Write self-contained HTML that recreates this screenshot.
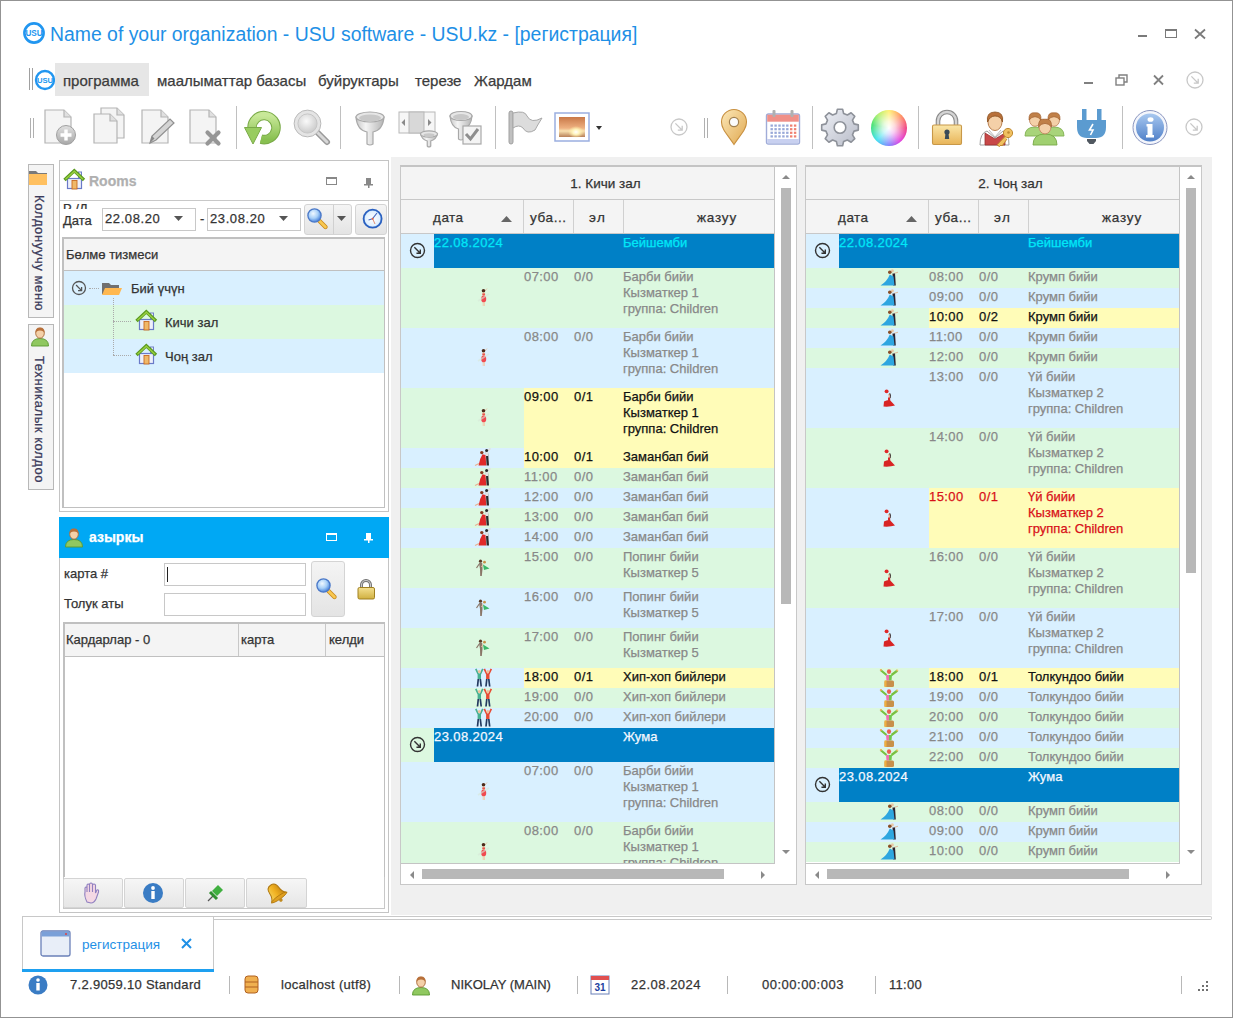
<!DOCTYPE html><html><head><meta charset="utf-8"><style>
html,body{margin:0;padding:0;width:1233px;height:1018px;overflow:hidden;background:#fff;}
body{position:relative;font-family:"Liberation Sans", sans-serif;}
.t{position:absolute;white-space:pre;line-height:16px;font-family:"Liberation Sans", sans-serif;-webkit-text-stroke:0.25px currentColor;}
svg{overflow:visible}
</style></head><body>
<div style="position:absolute;left:0px;top:0px;width:1233px;height:1018px;box-sizing:border-box;border:1px solid #939393;"></div>
<svg style="position:absolute;left:0px;top:0px" width="60" height="60" viewBox="0 0 60 60"><circle cx="34" cy="33" r="9.6" fill="none" stroke="#2196f0" stroke-width="2.6"/><text x="34" y="35.88" font-size="8.16" font-weight="bold" text-anchor="middle" fill="#2196f0" font-family="Liberation Sans">USU</text></svg>
<div class="t" style="left:50px;top:22px;font-size:19.4px;color:#1e90e6;line-height:24px;-webkit-text-stroke:0;">Name of your organization - USU software - USU.kz - [регистрация]</div>
<div style="position:absolute;left:1138px;top:35px;width:9px;height:2px;background:#7a7a7a"></div>
<div style="position:absolute;left:1165px;top:29px;width:12px;height:9px;box-sizing:border-box;border:1.5px solid #7a7a7a;border-top-width:2.5px"></div>
<svg style="position:absolute;left:1194px;top:29px" width="12" height="10" viewBox="0 0 12 10"><path d="M1 0.5 L11 9.5 M11 0.5 L1 9.5" stroke="#7a7a7a" stroke-width="1.8"/></svg>
<div style="position:absolute;left:29px;top:68px;width:1px;height:22px;background:#a0a0a0"></div>
<div style="position:absolute;left:32px;top:68px;width:1px;height:22px;background:#a0a0a0"></div>
<svg style="position:absolute;left:30px;top:66px" width="30" height="28" viewBox="0 0 30 28"><circle cx="15" cy="14" r="9" fill="none" stroke="#2196f0" stroke-width="2.4"/><text x="15" y="16.7" font-size="7.6499999999999995" font-weight="bold" text-anchor="middle" fill="#2196f0" font-family="Liberation Sans">USU</text></svg>
<div style="position:absolute;left:55px;top:63px;width:94px;height:33px;background:#e6e6e6"></div>
<div class="t" style="left:63px;top:72px;font-size:15px;color:#3b3b3b;line-height:18px;">программа</div>
<div class="t" style="left:157px;top:72px;font-size:15px;color:#3b3b3b;line-height:18px;">маалыматтар базасы</div>
<div class="t" style="left:318px;top:72px;font-size:15px;color:#3b3b3b;line-height:18px;">буйруктары</div>
<div class="t" style="left:415px;top:72px;font-size:15px;color:#3b3b3b;line-height:18px;">терезе</div>
<div class="t" style="left:474px;top:72px;font-size:15px;color:#3b3b3b;line-height:18px;">Жардам</div>
<div style="position:absolute;left:1084px;top:82px;width:9px;height:2px;background:#808080"></div>
<svg style="position:absolute;left:1115px;top:74px" width="14" height="12" viewBox="0 0 14 12"><rect x="1" y="4" width="8" height="7" fill="#fff" stroke="#808080" stroke-width="1.4"/><path d="M4 4 V1 H12 V8 H9" fill="none" stroke="#808080" stroke-width="1.4"/></svg>
<svg style="position:absolute;left:1153px;top:75px" width="11" height="10" viewBox="0 0 11 10"><path d="M1 0.5 L10 9.5 M10 0.5 L1 9.5" stroke="#808080" stroke-width="1.8"/></svg>
<svg style="position:absolute;left:1180px;top:65px" width="30" height="30" viewBox="0 0 30 30"><circle cx="15" cy="15" r="8" fill="none" stroke="#c8c8c8" stroke-width="1.3"/><path d="M11.4 11.4 L18.2 18.2 M18.2 13.8 V18.2 H13.8" fill="none" stroke="#c8c8c8" stroke-width="1.3"/></svg>
<div style="position:absolute;left:30px;top:118px;width:1px;height:20px;background:#b0b0b0"></div>
<div style="position:absolute;left:33px;top:118px;width:1px;height:20px;background:#b0b0b0"></div>
<svg style="position:absolute;left:44px;top:108px" width="36" height="40" viewBox="0 0 36 40"><path d="M1 2 H20 L27 9 V35 H1 Z" fill="#f4f4f4" stroke="#b4b4b4" stroke-width="1.2"/><path d="M20 2 V9 H27" fill="#e0e0e0" stroke="#b4b4b4" stroke-width="1.2"/><defs><linearGradient id="pl" x1="0" y1="0" x2="0" y2="1"><stop offset="0" stop-color="#e0e0e0"/><stop offset="1" stop-color="#a8a8a8"/></linearGradient></defs><circle cx="22" cy="27" r="9.5" fill="url(#pl)" stroke="#a0a0a0"/><path d="M22 21.5 V32.5 M16.5 27 H27.5" stroke="#fff" stroke-width="3.4"/></svg>
<svg style="position:absolute;left:92px;top:108px" width="36" height="40" viewBox="0 0 36 40"><path d="M9 0 H25 L32 7 V30 H9 Z" fill="#f4f4f4" stroke="#b4b4b4" stroke-width="1.2"/><path d="M25 0 V7 H32" fill="#e0e0e0" stroke="#b4b4b4" stroke-width="1.2"/><path d="M2 6 H18 L25 13 V35 H2 Z" fill="#f4f4f4" stroke="#b4b4b4" stroke-width="1.2"/><path d="M18 6 V13 H25" fill="#e0e0e0" stroke="#b4b4b4" stroke-width="1.2"/></svg>
<svg style="position:absolute;left:140px;top:108px" width="36" height="40" viewBox="0 0 36 40"><path d="M2 2 H21 L28 9 V35 H2 Z" fill="#f4f4f4" stroke="#b4b4b4" stroke-width="1.2"/><path d="M21 2 V9 H28" fill="#e0e0e0" stroke="#b4b4b4" stroke-width="1.2"/><path d="M10 35 L12 28 L30 11 L34 15 L16 32 Z" fill="#d4d4d4" stroke="#909090" stroke-width="1.2"/><path d="M10 35 L12 28 L14.5 30.5 Z" fill="#888"/></svg>
<svg style="position:absolute;left:188px;top:108px" width="36" height="40" viewBox="0 0 36 40"><path d="M2 2 H21 L28 9 V35 H2 Z" fill="#f4f4f4" stroke="#b4b4b4" stroke-width="1.2"/><path d="M21 2 V9 H28" fill="#e0e0e0" stroke="#b4b4b4" stroke-width="1.2"/><path d="M19.5 24.5 L30.5 35.5 M30.5 24.5 L19.5 35.5" stroke="#969696" stroke-width="4.2" stroke-linecap="round"/></svg>
<div style="position:absolute;left:236px;top:106px;width:1px;height:43px;background:#c0c0c0"></div>
<svg style="position:absolute;left:244px;top:108px" width="40" height="40" viewBox="0 0 40 40"><defs><linearGradient id="rg" x1="0" y1="0" x2="0" y2="1"><stop offset="0" stop-color="#c8e898"/><stop offset="1" stop-color="#88c050"/></linearGradient></defs><path d="M8 19.5 A12 12 0 1 1 17 31.2" fill="none" stroke="#7aaa48" stroke-width="9.5"/><path d="M8 19.5 A12 12 0 1 1 17 31.2" fill="none" stroke="url(#rg)" stroke-width="7.5"/><path d="M0.5 19.5 L17.5 19.5 L9 36 Z" fill="#98cc60" stroke="#7aaa48" stroke-width="1"/></svg>
<svg style="position:absolute;left:292px;top:108px" width="40" height="40" viewBox="0 0 40 40"><defs><radialGradient id="sg" cx="0.45" cy="0.4" r="0.6"><stop offset="0" stop-color="#fafafa"/><stop offset="1" stop-color="#c4c4c4"/></radialGradient></defs><path d="M26 25 L35 34" stroke="#9a9a9a" stroke-width="6" stroke-linecap="round"/><path d="M26 25 L35 34" stroke="#d8d8d8" stroke-width="3" stroke-linecap="round"/><circle cx="15.5" cy="15.5" r="11.5" fill="url(#sg)" stroke="#e4e4e4" stroke-width="4"/><circle cx="15.5" cy="15.5" r="13.4" fill="none" stroke="#b4b4b4" stroke-width="0.9"/><circle cx="15.5" cy="15.5" r="9.6" fill="none" stroke="#c0c0c0" stroke-width="0.8"/></svg>
<div style="position:absolute;left:340px;top:106px;width:1px;height:43px;background:#c0c0c0"></div>
<svg style="position:absolute;left:353px;top:108px" width="36" height="40" viewBox="0 0 36 40"><defs><linearGradient id="fg" x1="0" y1="0" x2="1" y2="0"><stop offset="0" stop-color="#c8c8c8"/><stop offset="0.35" stop-color="#f4f4f4"/><stop offset="1" stop-color="#b4b4b4"/></linearGradient></defs><path d="M3 9 Q4 22 14.0 24 V36 Q17 38 20.0 36 V24 Q30 22 31 9 Z" fill="url(#fg)" stroke="#a8a8a8" stroke-width="1.2"/><ellipse cx="17" cy="9" rx="14" ry="5" fill="#e6e6e6" stroke="#a8a8a8" stroke-width="1.2"/><ellipse cx="17" cy="10" rx="11" ry="3.5" fill="#c8c8c8"/></svg>
<svg style="position:absolute;left:398px;top:108px" width="44" height="40" viewBox="0 0 44 40"><rect x="1" y="4" width="36" height="21" fill="#f6f6f6" stroke="#b8b8b8"/><rect x="11" y="4" width="15" height="21" fill="#d8d8d8" stroke="#b8b8b8"/><path d="M7 11 L3.5 14.5 L7 18 Z M30 11 L33.5 14.5 L30 18 Z" fill="#8a8a8a"/><path d="M22.5 26 Q23.5 31 29.25 33 V38 Q31 40 32.75 38 V33 Q38.5 31 39.5 26 Z" fill="url(#fg)" stroke="#a8a8a8" stroke-width="1.2"/><ellipse cx="31" cy="26" rx="8.5" ry="3.2" fill="#e6e6e6" stroke="#a8a8a8" stroke-width="1.2"/><ellipse cx="31" cy="27" rx="5.5" ry="1.7000000000000002" fill="#c8c8c8"/></svg>
<svg style="position:absolute;left:448px;top:108px" width="40" height="40" viewBox="0 0 40 40"><path d="M2 8 Q3 19 10.5 21 V31 Q13 33 15.5 31 V21 Q23 19 24 8 Z" fill="url(#fg)" stroke="#a8a8a8" stroke-width="1.2"/><ellipse cx="13" cy="8" rx="11" ry="4.5" fill="#e6e6e6" stroke="#a8a8a8" stroke-width="1.2"/><ellipse cx="13" cy="9" rx="8" ry="3.0" fill="#c8c8c8"/><rect x="15" y="18" width="18" height="18" fill="#f4f4f4" stroke="#a8a8a8" stroke-width="1.2"/><path d="M18 26 L22.5 31 L30 21" fill="none" stroke="#8e8e8e" stroke-width="3"/></svg>
<div style="position:absolute;left:495px;top:106px;width:1px;height:43px;background:#c0c0c0"></div>
<svg style="position:absolute;left:505px;top:108px" width="40" height="40" viewBox="0 0 40 40"><rect x="4" y="3" width="4" height="33" rx="2" fill="#c0c0c0" stroke="#a0a0a0"/><path d="M8 5 Q20 2 22 8 Q26 16 37 10 Q32 18 30 22 Q22 27 18 20 Q14 16 8 20 Z" fill="#dcdcdc" stroke="#a8a8a8"/></svg>
<svg style="position:absolute;left:553px;top:108px" width="50" height="40" viewBox="0 0 50 40"><defs><linearGradient id="sky" x1="0" y1="0" x2="0" y2="1"><stop offset="0" stop-color="#c87848"/><stop offset="0.55" stop-color="#eeb080"/><stop offset="0.7" stop-color="#f8e0b0"/><stop offset="1" stop-color="#b88058"/></linearGradient><radialGradient id="sun" cx="0.5" cy="0.5" r="0.5"><stop offset="0" stop-color="#ffffff"/><stop offset="0.4" stop-color="#fff6c0"/><stop offset="1" stop-color="#fff0a0" stop-opacity="0"/></radialGradient></defs><rect x="2" y="5" width="34" height="28" fill="#fff" stroke="#9aaee0" stroke-width="1.5"/><rect x="6" y="9" width="26" height="20" fill="url(#sky)"/><ellipse cx="23" cy="24" rx="8" ry="6" fill="url(#sun)"/><path d="M43 18 H49 L46 22 Z" fill="#333"/></svg>
<svg style="position:absolute;left:664px;top:112px" width="30" height="30" viewBox="0 0 30 30"><circle cx="15" cy="15" r="8" fill="none" stroke="#c8c8c8" stroke-width="1.3"/><path d="M11.4 11.4 L18.2 18.2 M18.2 13.8 V18.2 H13.8" fill="none" stroke="#c8c8c8" stroke-width="1.3"/></svg>
<div style="position:absolute;left:704px;top:118px;width:1px;height:20px;background:#b0b0b0"></div>
<div style="position:absolute;left:707px;top:118px;width:1px;height:20px;background:#b0b0b0"></div>
<svg style="position:absolute;left:716px;top:108px" width="36" height="40" viewBox="0 0 36 40"><defs><linearGradient id="mp" x1="0" y1="0" x2="1" y2="1"><stop offset="0" stop-color="#fce8b8"/><stop offset="1" stop-color="#e0a850"/></linearGradient></defs><path d="M18 36.5 C11 26 5.5 21 5.5 14 A12.5 12.5 0 0 1 30.5 14 C30.5 21 25 26 18 36.5 Z" fill="url(#mp)" stroke="#c89040" stroke-width="1.1"/><circle cx="18" cy="14" r="4.6" fill="#fbfbfb" stroke="#a08050" stroke-width="1.2"/></svg>
<svg style="position:absolute;left:764px;top:108px" width="38" height="40" viewBox="0 0 38 40"><rect x="2.5" y="6" width="33" height="30" rx="2" fill="#fff" stroke="#a0acd8" stroke-width="1.4"/><rect x="3.2" y="6.7" width="31.6" height="7" fill="#f09088"/><rect x="3.2" y="31" width="31.6" height="4.3" fill="#c8d0f0"/><rect x="8.5" y="2" width="3" height="7" rx="1" fill="#b0b0b0"/><rect x="26.5" y="2" width="3" height="7" rx="1" fill="#b0b0b0"/><rect x="6.5" y="16.5" width="2.4" height="2.2" fill="#98a8d8"/><rect x="10.4" y="16.5" width="2.4" height="2.2" fill="#98a8d8"/><rect x="14.3" y="16.5" width="2.4" height="2.2" fill="#98a8d8"/><rect x="18.2" y="16.5" width="2.4" height="2.2" fill="#98a8d8"/><rect x="22.1" y="16.5" width="2.4" height="2.2" fill="#98a8d8"/><rect x="26.0" y="16.5" width="2.4" height="2.2" fill="#f08070"/><rect x="29.9" y="16.5" width="2.4" height="2.2" fill="#f08070"/><rect x="6.5" y="20.1" width="2.4" height="2.2" fill="#98a8d8"/><rect x="10.4" y="20.1" width="2.4" height="2.2" fill="#98a8d8"/><rect x="14.3" y="20.1" width="2.4" height="2.2" fill="#98a8d8"/><rect x="18.2" y="20.1" width="2.4" height="2.2" fill="#98a8d8"/><rect x="22.1" y="20.1" width="2.4" height="2.2" fill="#98a8d8"/><rect x="26.0" y="20.1" width="2.4" height="2.2" fill="#f08070"/><rect x="29.9" y="20.1" width="2.4" height="2.2" fill="#f08070"/><rect x="6.5" y="23.7" width="2.4" height="2.2" fill="#98a8d8"/><rect x="10.4" y="23.7" width="2.4" height="2.2" fill="#98a8d8"/><rect x="14.3" y="23.7" width="2.4" height="2.2" fill="#98a8d8"/><rect x="18.2" y="23.7" width="2.4" height="2.2" fill="#98a8d8"/><rect x="22.1" y="23.7" width="2.4" height="2.2" fill="#98a8d8"/><rect x="26.0" y="23.7" width="2.4" height="2.2" fill="#f08070"/><rect x="29.9" y="23.7" width="2.4" height="2.2" fill="#f08070"/><rect x="6.5" y="27.3" width="2.4" height="2.2" fill="#98a8d8"/><rect x="10.4" y="27.3" width="2.4" height="2.2" fill="#98a8d8"/><rect x="14.3" y="27.3" width="2.4" height="2.2" fill="#98a8d8"/><rect x="18.2" y="27.3" width="2.4" height="2.2" fill="#98a8d8"/><rect x="22.1" y="27.3" width="2.4" height="2.2" fill="#98a8d8"/><rect x="26.0" y="27.3" width="2.4" height="2.2" fill="#f08070"/><rect x="29.9" y="27.3" width="2.4" height="2.2" fill="#f08070"/></svg>
<div style="position:absolute;left:812px;top:106px;width:1px;height:43px;background:#c0c0c0"></div>
<svg style="position:absolute;left:820px;top:108px" width="40" height="40" viewBox="0 0 40 40"><defs><linearGradient id="gg" x1="0" y1="0" x2="1" y2="1"><stop offset="0" stop-color="#eef0f6"/><stop offset="1" stop-color="#b8bcc8"/></linearGradient></defs><path d="M34.04 15.89 L38.32 16.89 L38.32 22.11 L34.04 23.11 L32.48 26.88 L34.79 30.61 L31.11 34.29 L27.38 31.98 L23.61 33.54 L22.61 37.82 L17.39 37.82 L16.39 33.54 L12.62 31.98 L8.89 34.29 L5.21 30.61 L7.52 26.88 L5.96 23.11 L1.68 22.11 L1.68 16.89 L5.96 15.89 L7.52 12.12 L5.21 8.39 L8.89 4.71 L12.62 7.02 L16.39 5.46 L17.39 1.18 L22.61 1.18 L23.61 5.46 L27.38 7.02 L31.11 4.71 L34.79 8.39 L32.48 12.12 Z" fill="url(#gg)" stroke="#8e929a" stroke-width="1.6" stroke-linejoin="round"/><circle cx="20" cy="19.5" r="5.8" fill="#fff" stroke="#8e929a" stroke-width="1.6"/></svg>
<div style="position:absolute;left:871px;top:110px;width:36px;height:36px;border-radius:50%;background:radial-gradient(circle, rgba(255,255,255,1) 0%, rgba(255,255,255,0.75) 25%, rgba(255,255,255,0) 70%), conic-gradient(from 0deg, #fff070, #ff9060, #f04080 90deg, #e040e0 140deg, #8080ff 180deg, #40e0f0 225deg, #40e070 280deg, #b0f070 320deg, #fff070)"></div>
<div style="position:absolute;left:918px;top:106px;width:1px;height:43px;background:#c0c0c0"></div>
<svg style="position:absolute;left:928px;top:108px" width="38" height="40" viewBox="0 0 38 40"><defs><linearGradient id="lk" x1="0" y1="0" x2="0" y2="1"><stop offset="0" stop-color="#fae6a8"/><stop offset="1" stop-color="#e8b458"/></linearGradient><linearGradient id="sh" x1="0" y1="0" x2="1" y2="0"><stop offset="0" stop-color="#909090"/><stop offset="0.5" stop-color="#e0e0e0"/><stop offset="1" stop-color="#909090"/></linearGradient></defs><path d="M10 17 V13 A9 9 0 0 1 28 13 V17" fill="none" stroke="#8a8a8a" stroke-width="4.6"/><path d="M10 17 V13 A9 9 0 0 1 28 13 V17" fill="none" stroke="#d4d4d4" stroke-width="2.4"/><rect x="4.5" y="17" width="29" height="19.5" rx="1.5" fill="url(#lk)" stroke="#c89848" stroke-width="1.1"/><circle cx="19" cy="24" r="2.6" fill="#3a4a58"/><path d="M17.6 25 L16.8 31 H21.2 L20.4 25 Z" fill="#3a4a58"/></svg>
<svg style="position:absolute;left:976px;top:108px" width="40" height="40" viewBox="0 0 40 40"><path d="M4 37 Q4 25 11 23 L19 30 L27 23 Q33 25 33 37 Z" fill="#fff" stroke="#a0a0a0" stroke-width="1"/><path d="M9 37 V25 L19 31 L29 25 V37 Z" fill="#c84848" stroke="#983030" stroke-width="0.8"/><path d="M13 22 L19 29 L25 22" fill="#fff" stroke="#aaa" stroke-width="0.8"/><ellipse cx="19" cy="14" rx="7" ry="8.5" fill="#f4d0a8" stroke="#b88050" stroke-width="1"/><path d="M11.5 14 Q10 4 19 4 Q28 4 26.5 14 Q25 8 19 8 Q14 8 11.5 14 Z" fill="#b8703a" stroke="#8a5020" stroke-width="0.8"/><circle cx="32" cy="25" r="4.6" fill="#f0c060" stroke="#c08a30" stroke-width="1"/><circle cx="32.5" cy="24.5" r="1.3" fill="#c08a30"/><path d="M29 28.5 L21 37 L23.5 38.5 L25 37 L26 38 L31 31" fill="#f0c060" stroke="#c08a30" stroke-width="1"/></svg>
<svg style="position:absolute;left:1024px;top:108px" width="42" height="40" viewBox="0 0 42 40"><path d="M1 28 Q1 19 11 19 Q21 19 21 28 Z" fill="#a8d47a" stroke="#80b050" stroke-width="0.9"/><path d="M20 28 Q20 19 30 19 Q40 19 40 28 Z" fill="#a8d47a" stroke="#80b050" stroke-width="0.9"/><ellipse cx="11" cy="12" rx="5.5" ry="6.324999999999999" fill="#f4d0a8" stroke="#c08860" stroke-width="0.9"/><path d="M5.0 12 Q4.5 3.75 11 4.85 Q17.5 3.75 17.0 12 Q14.3 8.7 11 8.7 Q7.7 8.7 5.0 12 Z" fill="#c08048" stroke="#a06030" stroke-width="0.7"/><ellipse cx="30" cy="12" rx="5.5" ry="6.324999999999999" fill="#f4d0a8" stroke="#c08860" stroke-width="0.9"/><path d="M24.0 12 Q23.5 3.75 30 4.85 Q36.5 3.75 36.0 12 Q33.3 8.7 30 8.7 Q26.7 8.7 24.0 12 Z" fill="#c08048" stroke="#a06030" stroke-width="0.7"/><path d="M9 37 Q9 26 21 26 Q33 26 33 37 Z" fill="#a0d070" stroke="#78a848" stroke-width="0.9"/><ellipse cx="21" cy="19" rx="6" ry="6.8999999999999995" fill="#f4d0a8" stroke="#c08860" stroke-width="0.9"/><path d="M14.5 19 Q14 10.0 21 11.2 Q28 10.0 27.5 19 Q24.6 15.4 21 15.4 Q17.4 15.4 14.5 19 Z" fill="#c08048" stroke="#a06030" stroke-width="0.7"/></svg>
<svg style="position:absolute;left:1072px;top:108px" width="40" height="40" viewBox="0 0 40 40"><rect x="10" y="1" width="4.5" height="14" fill="#5b9bd0"/><rect x="25" y="1" width="4.5" height="14" fill="#5b9bd0"/><path d="M5 12 H34 V19 Q34 30 24 30 H15 Q5 30 5 19 Z" fill="#5b9bd0"/><path d="M21 16 L17.5 22 H21 L18.5 27" stroke="#fff" stroke-width="1.6" fill="none"/><path d="M15 31 H24 V33 L21.5 36 H17.5 L15 33 Z" fill="#505860"/></svg>
<div style="position:absolute;left:1122px;top:106px;width:1px;height:43px;background:#c0c0c0"></div>
<svg style="position:absolute;left:1130px;top:108px" width="40" height="40" viewBox="0 0 40 40"><defs><linearGradient id="ig" x1="0" y1="0" x2="0" y2="1"><stop offset="0" stop-color="#a8c8f0"/><stop offset="1" stop-color="#5080c8"/></linearGradient></defs><circle cx="20" cy="19.5" r="17" fill="#f4f6fc" stroke="#8a96c0" stroke-width="1"/><circle cx="20" cy="19.5" r="14" fill="url(#ig)"/><ellipse cx="20.5" cy="11.5" rx="3" ry="2.3" fill="#fff"/><path d="M16.5 16 H22.5 V27 H24 V29.5 H16 V27 H17.5 V18.5 H16.5 Z" fill="#fff"/></svg>
<svg style="position:absolute;left:1179px;top:112px" width="30" height="30" viewBox="0 0 30 30"><circle cx="15" cy="15" r="8" fill="none" stroke="#c8c8c8" stroke-width="1.3"/><path d="M11.4 11.4 L18.2 18.2 M18.2 13.8 V18.2 H13.8" fill="none" stroke="#c8c8c8" stroke-width="1.3"/></svg>
<div style="position:absolute;left:391px;top:157px;width:821px;height:758px;background:#f0f0f0"></div>
<div style="position:absolute;left:28px;top:164px;width:26px;height:154px;box-sizing:border-box;border:1px solid #b8b8b8;background:#f4f4f4"></div>
<div style="position:absolute;left:28px;top:324px;width:26px;height:166px;box-sizing:border-box;border:1px solid #b8b8b8;background:#f4f4f4"></div>
<svg style="position:absolute;left:29px;top:171px" width="20" height="20" viewBox="0 0 20 20"><path d="M0 0 H7 L9 2 H18 V6 H0 Z" fill="#7a7a7a"/><rect x="0" y="3" width="18" height="11" fill="#ffc060"/></svg>
<svg style="position:absolute;left:30px;top:326px" width="22" height="22" viewBox="0 0 22 22"><path d="M1.5 20 Q1.5 12.5 10 12.5 Q18.5 12.5 18.5 20 Z" fill="#90c860" stroke="#5a9a30" stroke-width="0.9"/><ellipse cx="10" cy="7.2" rx="4.3" ry="5" fill="#f4d0a8" stroke="#a86a38" stroke-width="0.9"/><path d="M5.5 7 Q5 1.5 10 1.5 Q15 1.5 14.5 7 Q13.5 4.5 10 4.5 Q6.5 4.5 5.5 7 Z" fill="#b8703a"/></svg>
<div class="t" style="left:32px;top:195px;font-size:13px;color:#3a3a5a;transform-origin:0 0;transform:translate(15px,0) rotate(90deg);letter-spacing:0.6px">Колдонуучу меню</div>
<div class="t" style="left:32px;top:356px;font-size:13px;color:#3a3a5a;transform-origin:0 0;transform:translate(15px,0) rotate(90deg);letter-spacing:0.6px">Техникалык колдоо</div>
<div style="position:absolute;left:59px;top:160px;width:330px;height:352px;box-sizing:border-box;border:1px solid #c4c4c4;background:#fff"></div>
<div style="position:absolute;left:60px;top:200px;width:328px;height:1px;background:#c8c8c8"></div>
<svg style="position:absolute;left:63px;top:169px" width="22" height="22" viewBox="0 0 22 22"><rect x="15.5" y="3" width="3" height="6" fill="#e8ecf8" stroke="#7080c8" stroke-width="1"/><rect x="4.5" y="9.5" width="14" height="10" fill="#eef0fa" stroke="#6a7ac8" stroke-width="1.2"/><rect x="9" y="11.5" width="5" height="8.5" fill="#f0b868" stroke="#c86a20" stroke-width="0.9"/><path d="M1.5 11 L11.3 1.8 L21 11" fill="none" stroke="#5a9a20" stroke-width="3.4"/><path d="M2.5 10.3 L11.3 2.2 L20 10.3" fill="none" stroke="#9ad040" stroke-width="1.3"/></svg>
<div class="t" style="left:89px;top:173px;font-size:14px;color:#b0b0b0;font-weight:bold;">Rooms</div>
<div style="position:absolute;left:326px;top:177px;width:11px;height:8px;box-sizing:border-box;border:1px solid #888;border-top-width:2px"></div>
<svg style="position:absolute;left:363px;top:178px" width="12" height="10" viewBox="0 0 12 10"><rect x="3" y="0" width="5" height="6" fill="#888"/><rect x="1" y="6" width="9" height="1.5" fill="#888"/><rect x="5" y="7" width="1.5" height="3" fill="#888"/></svg>
<div class="t" style="left:63px;top:213px;font-size:13px;color:#333;">Дата</div>
<div style="position:absolute;left:62px;top:204px;width:60px;height:5px;overflow:hidden"><div class="t" style="left:1px;top:-3px;font-size:13px;color:#333">Р /Д</div></div>
<div style="position:absolute;left:102px;top:208px;width:94px;height:23px;box-sizing:border-box;border:1px solid #c8c8c8;background:#fff"></div>
<div class="t" style="left:105px;top:211px;font-size:13px;color:#333;letter-spacing:0.6px">22.08.20</div>
<svg style="position:absolute;left:174px;top:216px" width="10" height="6" viewBox="0 0 10 6"><path d="M0 0 H9 L4.5 5 Z" fill="#555"/></svg>
<div class="t" style="left:200px;top:211px;font-size:13px;color:#333;">-</div>
<div style="position:absolute;left:207px;top:208px;width:94px;height:23px;box-sizing:border-box;border:1px solid #c8c8c8;background:#fff"></div>
<div class="t" style="left:210px;top:211px;font-size:13px;color:#333;letter-spacing:0.6px">23.08.20</div>
<svg style="position:absolute;left:279px;top:216px" width="10" height="6" viewBox="0 0 10 6"><path d="M0 0 H9 L4.5 5 Z" fill="#555"/></svg>
<div style="position:absolute;left:304px;top:204px;width:48px;height:31px;box-sizing:border-box;border:1px solid #d4d4d4;border-radius:3px;background:linear-gradient(#f4f4f4,#e4e4e4)"></div>
<div style="position:absolute;left:333px;top:205px;width:1px;height:29px;background:#d0d0d0"></div>
<svg style="position:absolute;left:306px;top:207px" width="26" height="26" viewBox="0 0 26 26"><defs><radialGradient id="mgl" cx="0.4" cy="0.35" r="0.6"><stop offset="0" stop-color="#f0f8ff"/><stop offset="0.6" stop-color="#a8d0f8"/><stop offset="1" stop-color="#5a90e0"/></radialGradient></defs><path d="M13.5 14 L19.5 20" stroke="#c88a20" stroke-width="4.4" stroke-linecap="round"/><path d="M13.5 14 L19.5 20" stroke="#f8c850" stroke-width="2.6" stroke-linecap="round"/><circle cx="8.5" cy="8.5" r="6.6" fill="url(#mgl)" stroke="#4a78c8" stroke-width="1.3"/></svg>
<svg style="position:absolute;left:337px;top:216px" width="10" height="6" viewBox="0 0 10 6"><path d="M0 0 H9 L4.5 5 Z" fill="#555"/></svg>
<div style="position:absolute;left:355px;top:204px;width:32px;height:31px;box-sizing:border-box;border:1px solid #d4d4d4;border-radius:3px;background:linear-gradient(#f4f4f4,#e4e4e4)"></div>
<svg style="position:absolute;left:362px;top:208px" width="22" height="22" viewBox="0 0 22 22"><defs><radialGradient id="clk" cx="0.5" cy="0.5" r="0.5"><stop offset="0" stop-color="#ffffff"/><stop offset="0.8" stop-color="#e0f0ff"/><stop offset="1" stop-color="#a0c8f0"/></radialGradient></defs><circle cx="10.6" cy="10.7" r="9" fill="url(#clk)" stroke="#2a60c0" stroke-width="1.8"/><path d="M10.6 10.7 L15 5 M10.6 10.7 L6.5 12" stroke="#4a6ac0" stroke-width="1.1"/><path d="M10.6 10.7 L13 16" stroke="#e08060" stroke-width="0.9"/><circle cx="10.6" cy="10.7" r="1" fill="#e06040"/></svg>
<div style="position:absolute;left:62px;top:237px;width:323px;height:271px;box-sizing:border-box;border:1px solid #c0c0c0;border-top:2px solid #c0c0c0;border-left:2px solid #c0c0c0;background:#fff"></div>
<div style="position:absolute;left:64px;top:239px;width:320px;height:31px;background:#f4f4f4"></div>
<div style="position:absolute;left:64px;top:270px;width:320px;height:1px;background:#c0c0c0"></div>
<div class="t" style="left:66px;top:247px;font-size:13px;color:#333;">Бөлмө тизмеси</div>
<div style="position:absolute;left:64px;top:271px;width:320px;height:34px;background:#d9f0ff"></div>
<div style="position:absolute;left:64px;top:305px;width:320px;height:34px;background:#dcf8e0"></div>
<div style="position:absolute;left:64px;top:339px;width:320px;height:34px;background:#d9f0ff"></div>
<svg style="position:absolute;left:71px;top:280px" width="18" height="18" viewBox="0 0 18 18"><circle cx="8" cy="8" r="6.5" fill="none" stroke="#555" stroke-width="1.3"/><path d="M5.074999999999999 5.074999999999999 L10.6 10.6 M10.6 7.025 V10.6 H7.025" fill="none" stroke="#555" stroke-width="1.3"/></svg>
<div style="position:absolute;left:89px;top:288px;width:10px;height:1px;border-top:1px dotted #aaa"></div>
<div style="position:absolute;left:113px;top:298px;width:1px;height:57px;border-left:1px dotted #aaa"></div>
<div style="position:absolute;left:113px;top:321px;width:18px;height:1px;border-top:1px dotted #aaa"></div>
<div style="position:absolute;left:113px;top:355px;width:18px;height:1px;border-top:1px dotted #aaa"></div>
<svg style="position:absolute;left:101px;top:279px" width="22" height="18" viewBox="0 0 22 18"><path d="M1 4 H8 L10 6 H18 V15 H1 Z" fill="#707070"/><path d="M4 9 H21 L18 16 H1 Z" fill="#ffb850"/></svg>
<div class="t" style="left:131px;top:281px;font-size:13px;color:#333;">Бий үчүн</div>
<svg style="position:absolute;left:135px;top:310px" width="22" height="22" viewBox="0 0 22 22"><rect x="15.5" y="3" width="3" height="6" fill="#e8ecf8" stroke="#7080c8" stroke-width="1"/><rect x="4.5" y="9.5" width="14" height="10" fill="#eef0fa" stroke="#6a7ac8" stroke-width="1.2"/><rect x="9" y="11.5" width="5" height="8.5" fill="#f0b868" stroke="#c86a20" stroke-width="0.9"/><path d="M1.5 11 L11.3 1.8 L21 11" fill="none" stroke="#5a9a20" stroke-width="3.4"/><path d="M2.5 10.3 L11.3 2.2 L20 10.3" fill="none" stroke="#9ad040" stroke-width="1.3"/></svg>
<div class="t" style="left:165px;top:315px;font-size:13px;color:#333;">Кичи зал</div>
<svg style="position:absolute;left:135px;top:344px" width="22" height="22" viewBox="0 0 22 22"><rect x="15.5" y="3" width="3" height="6" fill="#e8ecf8" stroke="#7080c8" stroke-width="1"/><rect x="4.5" y="9.5" width="14" height="10" fill="#eef0fa" stroke="#6a7ac8" stroke-width="1.2"/><rect x="9" y="11.5" width="5" height="8.5" fill="#f0b868" stroke="#c86a20" stroke-width="0.9"/><path d="M1.5 11 L11.3 1.8 L21 11" fill="none" stroke="#5a9a20" stroke-width="3.4"/><path d="M2.5 10.3 L11.3 2.2 L20 10.3" fill="none" stroke="#9ad040" stroke-width="1.3"/></svg>
<div class="t" style="left:165px;top:349px;font-size:13px;color:#333;">Чоң зал</div>
<div style="position:absolute;left:59px;top:517px;width:330px;height:396px;box-sizing:border-box;border:1px solid #c4c4c4;background:#fff"></div>
<div style="position:absolute;left:59px;top:517px;width:330px;height:41px;background:#00a8f4"></div>
<svg style="position:absolute;left:64px;top:527px" width="22" height="22" viewBox="0 0 22 22"><path d="M1.5 20 Q1.5 12.5 10 12.5 Q18.5 12.5 18.5 20 Z" fill="#90c860" stroke="#5a9a30" stroke-width="0.9"/><ellipse cx="10" cy="7.2" rx="4.3" ry="5" fill="#f4d0a8" stroke="#a86a38" stroke-width="0.9"/><path d="M5.5 7 Q5 1.5 10 1.5 Q15 1.5 14.5 7 Q13.5 4.5 10 4.5 Q6.5 4.5 5.5 7 Z" fill="#b8703a"/></svg>
<div class="t" style="left:89px;top:529px;font-size:14px;color:#fff;font-weight:bold;">азыркы</div>
<div style="position:absolute;left:326px;top:533px;width:11px;height:8px;box-sizing:border-box;border:1px solid #fff;border-top-width:2px"></div>
<svg style="position:absolute;left:363px;top:533px" width="12" height="10" viewBox="0 0 12 10"><rect x="3" y="0" width="5" height="6" fill="#fff"/><rect x="1" y="6" width="9" height="1.5" fill="#fff"/><rect x="5" y="7" width="1.5" height="3" fill="#fff"/></svg>
<div class="t" style="left:64px;top:566px;font-size:13px;color:#333;">карта #</div>
<div class="t" style="left:64px;top:596px;font-size:13px;color:#333;">Толук аты</div>
<div style="position:absolute;left:164px;top:563px;width:142px;height:23px;box-sizing:border-box;border:1px solid #c8c8c8;background:#fff"></div>
<div style="position:absolute;left:167px;top:567px;width:1px;height:15px;background:#222"></div>
<div style="position:absolute;left:164px;top:593px;width:142px;height:23px;box-sizing:border-box;border:1px solid #c8c8c8;background:#fff"></div>
<div style="position:absolute;left:311px;top:561px;width:34px;height:56px;box-sizing:border-box;border:1px solid #d4d4d4;border-radius:3px;background:linear-gradient(#f4f4f4,#e4e4e4)"></div>
<svg style="position:absolute;left:315px;top:577px" width="26" height="26" viewBox="0 0 26 26"><defs><radialGradient id="mgl" cx="0.4" cy="0.35" r="0.6"><stop offset="0" stop-color="#f0f8ff"/><stop offset="0.6" stop-color="#a8d0f8"/><stop offset="1" stop-color="#5a90e0"/></radialGradient></defs><path d="M13.5 14 L19.5 20" stroke="#c88a20" stroke-width="4.4" stroke-linecap="round"/><path d="M13.5 14 L19.5 20" stroke="#f8c850" stroke-width="2.6" stroke-linecap="round"/><circle cx="8.5" cy="8.5" r="6.6" fill="url(#mgl)" stroke="#4a78c8" stroke-width="1.3"/></svg>
<svg style="position:absolute;left:355px;top:578px" width="22" height="24" viewBox="0 0 22 24"><defs><linearGradient id="lk2" x1="0" y1="0" x2="0" y2="1"><stop offset="0" stop-color="#f4e090"/><stop offset="1" stop-color="#d0b040"/></linearGradient></defs><path d="M6.5 10 V7 A4.5 4.5 0 0 1 15.5 7 V10" fill="none" stroke="#707070" stroke-width="3"/><path d="M6.5 10 V7 A4.5 4.5 0 0 1 15.5 7 V10" fill="none" stroke="#c8c8c8" stroke-width="1.2"/><rect x="3" y="9.5" width="16.5" height="11.5" rx="1.5" fill="url(#lk2)" stroke="#a08020" stroke-width="1"/></svg>
<div style="position:absolute;left:63px;top:622px;width:322px;height:256px;box-sizing:border-box;border:1px solid #c0c0c0;border-top:2px solid #c0c0c0;border-left:2px solid #c0c0c0;background:#fff"></div>
<div style="position:absolute;left:65px;top:624px;width:319px;height:32px;background:#f4f4f4"></div>
<div style="position:absolute;left:65px;top:656px;width:319px;height:1px;background:#c0c0c0"></div>
<div style="position:absolute;left:238px;top:624px;width:1px;height:32px;background:#c8c8c8"></div>
<div style="position:absolute;left:325px;top:624px;width:1px;height:32px;background:#c8c8c8"></div>
<div class="t" style="left:66px;top:632px;font-size:13px;color:#333;">Кардарлар - 0</div>
<div class="t" style="left:241px;top:632px;font-size:13px;color:#333;">карта</div>
<div class="t" style="left:329px;top:632px;font-size:13px;color:#333;">келди</div>
<div style="position:absolute;left:63px;top:877px;width:322px;height:32px;box-sizing:border-box;border:1px solid #c8c8c8;border-top:none;background:#fff"></div>
<div style="position:absolute;left:63px;top:878px;width:60px;height:30px;box-sizing:border-box;border:1px solid #d4d4d4;border-radius:2px;background:linear-gradient(#f6f6f6,#e6e6e6)"></div>
<div style="position:absolute;left:124px;top:878px;width:60px;height:30px;box-sizing:border-box;border:1px solid #d4d4d4;border-radius:2px;background:linear-gradient(#f6f6f6,#e6e6e6)"></div>
<div style="position:absolute;left:185px;top:878px;width:60px;height:30px;box-sizing:border-box;border:1px solid #d4d4d4;border-radius:2px;background:linear-gradient(#f6f6f6,#e6e6e6)"></div>
<div style="position:absolute;left:246px;top:878px;width:61px;height:30px;box-sizing:border-box;border:1px solid #d4d4d4;border-radius:2px;background:linear-gradient(#f6f6f6,#e6e6e6)"></div>
<svg style="position:absolute;left:82px;top:882px" width="20" height="22" viewBox="0 0 20 22"><path d="M5 20 Q2 14 3 10 V6 Q4 4 5 6 V10 V3 Q6 1 7.5 3 V10 V2 Q9 0 10.5 2 V10 V3 Q12 1 13.5 3 V11 L15 8 Q17 7 16.5 10 L14 17 Q12 21 9 21 Z" fill="#f4d8e4" stroke="#9080c0" stroke-width="1.1"/></svg>
<svg style="position:absolute;left:143px;top:883px" width="22" height="22" viewBox="0 0 22 22"><circle cx="10" cy="10" r="10" fill="#3a7cc4"/><rect x="8.3" y="8" width="3.4" height="8" fill="#fff"/><circle cx="10" cy="5" r="1.9" fill="#fff"/></svg>
<svg style="position:absolute;left:204px;top:883px" width="22" height="22" viewBox="0 0 22 22"><path d="M4 18 L10 12" stroke="#555" stroke-width="1.2"/><path d="M8 8 L14 2 L19 7 L13 13 Z" fill="#40b040"/><path d="M6 9 L13 16" stroke="#309030" stroke-width="3"/></svg>
<svg style="position:absolute;left:264px;top:881px" width="24" height="24" viewBox="0 0 24 24"><defs><linearGradient id="bl" x1="0" y1="0" x2="1" y2="0"><stop offset="0" stop-color="#f8d860"/><stop offset="0.5" stop-color="#f0b020"/><stop offset="1" stop-color="#c08010"/></linearGradient></defs><g transform="rotate(-35 12 12)"><path d="M12 2.5 Q6.5 2.5 6.5 9 Q6.5 14 3 17.5 H21 Q17.5 14 17.5 9 Q17.5 2.5 12 2.5 Z" fill="url(#bl)" stroke="#b07810" stroke-width="1"/><ellipse cx="12" cy="17.5" rx="9" ry="1.8" fill="#e0a020" stroke="#b07810" stroke-width="0.8"/><circle cx="12" cy="20.5" r="1.8" fill="#c08a20"/></g></svg>
<div style="position:absolute;left:400px;top:165px;width:397px;height:720px;box-sizing:border-box;border:1px solid #c8c8c8;border-top:2px solid #c4c4c4;background:#fff"></div>
<div style="position:absolute;left:401px;top:167px;width:374px;height:32px;background:#f4f4f4"></div>
<div style="position:absolute;left:401px;top:199px;width:374px;height:1px;background:#c8c8c8"></div>
<div class="t" style="left:419px;top:176px;width:373px;text-align:center;font-size:13.5px;color:#333">1. Кичи зал</div>
<div style="position:absolute;left:401px;top:200px;width:374px;height:33px;background:#f4f4f4"></div>
<div style="position:absolute;left:401px;top:233px;width:374px;height:1px;background:#c8c8c8"></div>
<div style="position:absolute;left:523px;top:200px;width:1px;height:33px;background:#d0d0d0"></div>
<div style="position:absolute;left:573px;top:200px;width:1px;height:33px;background:#d0d0d0"></div>
<div style="position:absolute;left:623px;top:200px;width:1px;height:33px;background:#d0d0d0"></div>
<div class="t" style="left:433px;top:210px;font-size:13.5px;color:#333;letter-spacing:0.5px">дата</div>
<svg style="position:absolute;left:501px;top:216px" width="12" height="6" viewBox="0 0 12 6"><path d="M0 6 L5.5 0 L11 6 Z" fill="#666"/></svg>
<div class="t" style="left:530px;top:210px;font-size:13.5px;color:#333;letter-spacing:0.6px">уба...</div>
<div class="t" style="left:589px;top:210px;font-size:13.5px;color:#333;letter-spacing:1.5px">эл</div>
<div class="t" style="left:697px;top:210px;font-size:13.5px;color:#333;letter-spacing:0.8px">жазуу</div>
<div style="position:absolute;left:401px;top:234px;width:374px;height:629px;overflow:hidden">
<div style="position:absolute;left:0;top:0px;width:374px;height:34px;background:#d9f0ff"></div>
<div style="position:absolute;left:33px;top:0px;width:341px;height:34px;background:#0080c6"></div>
<svg style="position:absolute;left:8px;top:8px" width="18" height="18"><circle cx="8.5" cy="8.5" r="7" fill="none" stroke="#333" stroke-width="1.4"/><path d="M5.35 5.35 L11.3 11.3 M11.3 7.45 V11.3 H7.45" fill="none" stroke="#333" stroke-width="1.4"/></svg>
<div class="t" style="left:33px;top:1px;font-size:13px;color:#00e8f8;letter-spacing:0.4px">22.08.2024</div>
<div class="t" style="left:222px;top:1px;font-size:13px;color:#00e8f8">Бейшемби</div>
<div style="position:absolute;left:0;top:34px;width:374px;height:60px;background:#dcf8e0"></div>
</div>
<svg style="position:absolute;left:474px;top:288.0px" width="20" height="20" viewBox="0 0 20 20"><path d="M9 5 L13 0.5" stroke="#e8c0a0" stroke-width="0.9"/><circle cx="9.5" cy="2.8" r="1.8" fill="#4a2a1a"/><rect x="8.5" y="4.5" width="2.4" height="3.5" fill="#f0b898"/><rect x="8.3" y="5.6" width="2.8" height="1.2" fill="#e84040"/><ellipse cx="9.7" cy="11" rx="2.5" ry="3.4" fill="#f04a50"/><path d="M9.2 14 V18 M10.4 14 V18" stroke="#f0c8a8" stroke-width="0.9"/><path d="M4 13 L15 6" stroke="#d8e8d8" stroke-width="1.5" opacity="0.6"/></svg>
<div style="position:absolute;left:401px;top:234px;width:374px;height:629px;overflow:hidden">
<div class="t" style="left:123px;top:35px;font-size:13px;color:#888888;letter-spacing:0.4px">07:00</div>
<div class="t" style="left:173px;top:35px;font-size:13px;color:#888888;letter-spacing:0.4px">0/0</div>
<div class="t" style="left:222px;top:35px;font-size:13px;color:#888888">Барби бийи
Кызматкер 1
группа: Children</div>
<div style="position:absolute;left:0;top:94px;width:374px;height:60px;background:#d9f0ff"></div>
</div>
<svg style="position:absolute;left:474px;top:348.0px" width="20" height="20" viewBox="0 0 20 20"><path d="M9 5 L13 0.5" stroke="#e8c0a0" stroke-width="0.9"/><circle cx="9.5" cy="2.8" r="1.8" fill="#4a2a1a"/><rect x="8.5" y="4.5" width="2.4" height="3.5" fill="#f0b898"/><rect x="8.3" y="5.6" width="2.8" height="1.2" fill="#e84040"/><ellipse cx="9.7" cy="11" rx="2.5" ry="3.4" fill="#f04a50"/><path d="M9.2 14 V18 M10.4 14 V18" stroke="#f0c8a8" stroke-width="0.9"/><path d="M4 13 L15 6" stroke="#d8e8d8" stroke-width="1.5" opacity="0.6"/></svg>
<div style="position:absolute;left:401px;top:234px;width:374px;height:629px;overflow:hidden">
<div class="t" style="left:123px;top:95px;font-size:13px;color:#888888;letter-spacing:0.4px">08:00</div>
<div class="t" style="left:173px;top:95px;font-size:13px;color:#888888;letter-spacing:0.4px">0/0</div>
<div class="t" style="left:222px;top:95px;font-size:13px;color:#888888">Барби бийи
Кызматкер 1
группа: Children</div>
<div style="position:absolute;left:0;top:154px;width:374px;height:60px;background:#dcf8e0"></div>
<div style="position:absolute;left:123px;top:154px;width:251px;height:60px;background:#fffcb8"></div>
</div>
<svg style="position:absolute;left:474px;top:408.0px" width="20" height="20" viewBox="0 0 20 20"><path d="M9 5 L13 0.5" stroke="#e8c0a0" stroke-width="0.9"/><circle cx="9.5" cy="2.8" r="1.8" fill="#4a2a1a"/><rect x="8.5" y="4.5" width="2.4" height="3.5" fill="#f0b898"/><rect x="8.3" y="5.6" width="2.8" height="1.2" fill="#e84040"/><ellipse cx="9.7" cy="11" rx="2.5" ry="3.4" fill="#f04a50"/><path d="M9.2 14 V18 M10.4 14 V18" stroke="#f0c8a8" stroke-width="0.9"/><path d="M4 13 L15 6" stroke="#d8e8d8" stroke-width="1.5" opacity="0.6"/></svg>
<div style="position:absolute;left:401px;top:234px;width:374px;height:629px;overflow:hidden">
<div class="t" style="left:123px;top:155px;font-size:13px;color:#111;letter-spacing:0.4px">09:00</div>
<div class="t" style="left:173px;top:155px;font-size:13px;color:#111;letter-spacing:0.4px">0/1</div>
<div class="t" style="left:222px;top:155px;font-size:13px;color:#111">Барби бийи
Кызматкер 1
группа: Children</div>
<div style="position:absolute;left:0;top:214px;width:374px;height:20px;background:#d9f0ff"></div>
<div style="position:absolute;left:123px;top:214px;width:251px;height:20px;background:#fffcb8"></div>
</div>
<svg style="position:absolute;left:474px;top:448.0px" width="20" height="20" viewBox="0 0 20 20"><path d="M13 3 L16.5 0.5" stroke="#e0e0e0" stroke-width="1.6"/><circle cx="12.6" cy="2.4" r="1.5" fill="#2a2a2a"/><path d="M11.8 4 L14 4 L15 17.5 L12.6 17.5 Z" fill="#2a2a2a"/><path d="M11.6 4 L14 4 L14.2 8 L11.9 8 Z" fill="#e4e4e4"/><circle cx="7.8" cy="4.6" r="1.7" fill="#8a3a20"/><path d="M4.5 17.5 Q5.5 11 8.5 6.3 L11.5 7 L12.3 17.5 Z" fill="#e02a2a"/><path d="M1 17.5 L5 15.5" stroke="#e8b090" stroke-width="1.2"/></svg>
<div style="position:absolute;left:401px;top:234px;width:374px;height:629px;overflow:hidden">
<div class="t" style="left:123px;top:215px;font-size:13px;color:#111;letter-spacing:0.4px">10:00</div>
<div class="t" style="left:173px;top:215px;font-size:13px;color:#111;letter-spacing:0.4px">0/1</div>
<div class="t" style="left:222px;top:215px;font-size:13px;color:#111">Заманбап бий</div>
<div style="position:absolute;left:0;top:234px;width:374px;height:20px;background:#dcf8e0"></div>
</div>
<svg style="position:absolute;left:474px;top:468.0px" width="20" height="20" viewBox="0 0 20 20"><path d="M13 3 L16.5 0.5" stroke="#e0e0e0" stroke-width="1.6"/><circle cx="12.6" cy="2.4" r="1.5" fill="#2a2a2a"/><path d="M11.8 4 L14 4 L15 17.5 L12.6 17.5 Z" fill="#2a2a2a"/><path d="M11.6 4 L14 4 L14.2 8 L11.9 8 Z" fill="#e4e4e4"/><circle cx="7.8" cy="4.6" r="1.7" fill="#8a3a20"/><path d="M4.5 17.5 Q5.5 11 8.5 6.3 L11.5 7 L12.3 17.5 Z" fill="#e02a2a"/><path d="M1 17.5 L5 15.5" stroke="#e8b090" stroke-width="1.2"/></svg>
<div style="position:absolute;left:401px;top:234px;width:374px;height:629px;overflow:hidden">
<div class="t" style="left:123px;top:235px;font-size:13px;color:#888888;letter-spacing:0.4px">11:00</div>
<div class="t" style="left:173px;top:235px;font-size:13px;color:#888888;letter-spacing:0.4px">0/0</div>
<div class="t" style="left:222px;top:235px;font-size:13px;color:#888888">Заманбап бий</div>
<div style="position:absolute;left:0;top:254px;width:374px;height:20px;background:#d9f0ff"></div>
</div>
<svg style="position:absolute;left:474px;top:488.0px" width="20" height="20" viewBox="0 0 20 20"><path d="M13 3 L16.5 0.5" stroke="#e0e0e0" stroke-width="1.6"/><circle cx="12.6" cy="2.4" r="1.5" fill="#2a2a2a"/><path d="M11.8 4 L14 4 L15 17.5 L12.6 17.5 Z" fill="#2a2a2a"/><path d="M11.6 4 L14 4 L14.2 8 L11.9 8 Z" fill="#e4e4e4"/><circle cx="7.8" cy="4.6" r="1.7" fill="#8a3a20"/><path d="M4.5 17.5 Q5.5 11 8.5 6.3 L11.5 7 L12.3 17.5 Z" fill="#e02a2a"/><path d="M1 17.5 L5 15.5" stroke="#e8b090" stroke-width="1.2"/></svg>
<div style="position:absolute;left:401px;top:234px;width:374px;height:629px;overflow:hidden">
<div class="t" style="left:123px;top:255px;font-size:13px;color:#888888;letter-spacing:0.4px">12:00</div>
<div class="t" style="left:173px;top:255px;font-size:13px;color:#888888;letter-spacing:0.4px">0/0</div>
<div class="t" style="left:222px;top:255px;font-size:13px;color:#888888">Заманбап бий</div>
<div style="position:absolute;left:0;top:274px;width:374px;height:20px;background:#dcf8e0"></div>
</div>
<svg style="position:absolute;left:474px;top:508.0px" width="20" height="20" viewBox="0 0 20 20"><path d="M13 3 L16.5 0.5" stroke="#e0e0e0" stroke-width="1.6"/><circle cx="12.6" cy="2.4" r="1.5" fill="#2a2a2a"/><path d="M11.8 4 L14 4 L15 17.5 L12.6 17.5 Z" fill="#2a2a2a"/><path d="M11.6 4 L14 4 L14.2 8 L11.9 8 Z" fill="#e4e4e4"/><circle cx="7.8" cy="4.6" r="1.7" fill="#8a3a20"/><path d="M4.5 17.5 Q5.5 11 8.5 6.3 L11.5 7 L12.3 17.5 Z" fill="#e02a2a"/><path d="M1 17.5 L5 15.5" stroke="#e8b090" stroke-width="1.2"/></svg>
<div style="position:absolute;left:401px;top:234px;width:374px;height:629px;overflow:hidden">
<div class="t" style="left:123px;top:275px;font-size:13px;color:#888888;letter-spacing:0.4px">13:00</div>
<div class="t" style="left:173px;top:275px;font-size:13px;color:#888888;letter-spacing:0.4px">0/0</div>
<div class="t" style="left:222px;top:275px;font-size:13px;color:#888888">Заманбап бий</div>
<div style="position:absolute;left:0;top:294px;width:374px;height:20px;background:#d9f0ff"></div>
</div>
<svg style="position:absolute;left:474px;top:528.0px" width="20" height="20" viewBox="0 0 20 20"><path d="M13 3 L16.5 0.5" stroke="#e0e0e0" stroke-width="1.6"/><circle cx="12.6" cy="2.4" r="1.5" fill="#2a2a2a"/><path d="M11.8 4 L14 4 L15 17.5 L12.6 17.5 Z" fill="#2a2a2a"/><path d="M11.6 4 L14 4 L14.2 8 L11.9 8 Z" fill="#e4e4e4"/><circle cx="7.8" cy="4.6" r="1.7" fill="#8a3a20"/><path d="M4.5 17.5 Q5.5 11 8.5 6.3 L11.5 7 L12.3 17.5 Z" fill="#e02a2a"/><path d="M1 17.5 L5 15.5" stroke="#e8b090" stroke-width="1.2"/></svg>
<div style="position:absolute;left:401px;top:234px;width:374px;height:629px;overflow:hidden">
<div class="t" style="left:123px;top:295px;font-size:13px;color:#888888;letter-spacing:0.4px">14:00</div>
<div class="t" style="left:173px;top:295px;font-size:13px;color:#888888;letter-spacing:0.4px">0/0</div>
<div class="t" style="left:222px;top:295px;font-size:13px;color:#888888">Заманбап бий</div>
<div style="position:absolute;left:0;top:314px;width:374px;height:40px;background:#dcf8e0"></div>
</div>
<svg style="position:absolute;left:474px;top:558.0px" width="20" height="20" viewBox="0 0 20 20"><circle cx="6.5" cy="3.2" r="1.6" fill="#5a3a28"/><path d="M5 5 L8.2 5 L8.5 11 L7.8 18 H6.2 L6 11 Z" fill="#8a7668"/><path d="M5.2 6 L2.5 10" stroke="#8a7668" stroke-width="1.2"/><circle cx="10.5" cy="4.2" r="1.4" fill="#c89048"/><path d="M9 6.5 L15.5 10.5 L10 12 Z" fill="#3cb868"/><path d="M9 6.5 L7.5 9" stroke="#e8c0a0" stroke-width="1"/></svg>
<div style="position:absolute;left:401px;top:234px;width:374px;height:629px;overflow:hidden">
<div class="t" style="left:123px;top:315px;font-size:13px;color:#888888;letter-spacing:0.4px">15:00</div>
<div class="t" style="left:173px;top:315px;font-size:13px;color:#888888;letter-spacing:0.4px">0/0</div>
<div class="t" style="left:222px;top:315px;font-size:13px;color:#888888">Попинг бийи
Кызматкер 5</div>
<div style="position:absolute;left:0;top:354px;width:374px;height:40px;background:#d9f0ff"></div>
</div>
<svg style="position:absolute;left:474px;top:598.0px" width="20" height="20" viewBox="0 0 20 20"><circle cx="6.5" cy="3.2" r="1.6" fill="#5a3a28"/><path d="M5 5 L8.2 5 L8.5 11 L7.8 18 H6.2 L6 11 Z" fill="#8a7668"/><path d="M5.2 6 L2.5 10" stroke="#8a7668" stroke-width="1.2"/><circle cx="10.5" cy="4.2" r="1.4" fill="#c89048"/><path d="M9 6.5 L15.5 10.5 L10 12 Z" fill="#3cb868"/><path d="M9 6.5 L7.5 9" stroke="#e8c0a0" stroke-width="1"/></svg>
<div style="position:absolute;left:401px;top:234px;width:374px;height:629px;overflow:hidden">
<div class="t" style="left:123px;top:355px;font-size:13px;color:#888888;letter-spacing:0.4px">16:00</div>
<div class="t" style="left:173px;top:355px;font-size:13px;color:#888888;letter-spacing:0.4px">0/0</div>
<div class="t" style="left:222px;top:355px;font-size:13px;color:#888888">Попинг бийи
Кызматкер 5</div>
<div style="position:absolute;left:0;top:394px;width:374px;height:40px;background:#dcf8e0"></div>
</div>
<svg style="position:absolute;left:474px;top:638.0px" width="20" height="20" viewBox="0 0 20 20"><circle cx="6.5" cy="3.2" r="1.6" fill="#5a3a28"/><path d="M5 5 L8.2 5 L8.5 11 L7.8 18 H6.2 L6 11 Z" fill="#8a7668"/><path d="M5.2 6 L2.5 10" stroke="#8a7668" stroke-width="1.2"/><circle cx="10.5" cy="4.2" r="1.4" fill="#c89048"/><path d="M9 6.5 L15.5 10.5 L10 12 Z" fill="#3cb868"/><path d="M9 6.5 L7.5 9" stroke="#e8c0a0" stroke-width="1"/></svg>
<div style="position:absolute;left:401px;top:234px;width:374px;height:629px;overflow:hidden">
<div class="t" style="left:123px;top:395px;font-size:13px;color:#888888;letter-spacing:0.4px">17:00</div>
<div class="t" style="left:173px;top:395px;font-size:13px;color:#888888;letter-spacing:0.4px">0/0</div>
<div class="t" style="left:222px;top:395px;font-size:13px;color:#888888">Попинг бийи
Кызматкер 5</div>
<div style="position:absolute;left:0;top:434px;width:374px;height:20px;background:#d9f0ff"></div>
<div style="position:absolute;left:123px;top:434px;width:251px;height:20px;background:#fffcb8"></div>
</div>
<svg style="position:absolute;left:474px;top:668.0px" width="20" height="20" viewBox="0 0 20 20"><path d="M1.8 0.8 L4.2 6 M8.8 0.8 L6.4 6" stroke="#48b090" stroke-width="1.7"/><circle cx="5.3" cy="3.4" r="1.5" fill="#f0c098"/><path d="M3.6 5.5 H7 V11 H3.6 Z" fill="#48b090"/><path d="M4.3 11 L3.5 18.5 M6.3 11 L7.2 18.5" stroke="#243a60" stroke-width="1.7"/><path d="M10.3 0.8 L12.7 6 M17.3 0.8 L14.9 6" stroke="#e84a32" stroke-width="1.7"/><circle cx="13.8" cy="3.4" r="1.5" fill="#f0c098"/><path d="M12.1 5.5 H15.5 V11 H12.1 Z" fill="#e84a32"/><path d="M12.8 11 L12.0 18.5 M14.8 11 L15.7 18.5" stroke="#243a60" stroke-width="1.7"/></svg>
<div style="position:absolute;left:401px;top:234px;width:374px;height:629px;overflow:hidden">
<div class="t" style="left:123px;top:435px;font-size:13px;color:#111;letter-spacing:0.4px">18:00</div>
<div class="t" style="left:173px;top:435px;font-size:13px;color:#111;letter-spacing:0.4px">0/1</div>
<div class="t" style="left:222px;top:435px;font-size:13px;color:#111">Хип-хоп бийлери</div>
<div style="position:absolute;left:0;top:454px;width:374px;height:20px;background:#dcf8e0"></div>
</div>
<svg style="position:absolute;left:474px;top:688.0px" width="20" height="20" viewBox="0 0 20 20"><path d="M1.8 0.8 L4.2 6 M8.8 0.8 L6.4 6" stroke="#48b090" stroke-width="1.7"/><circle cx="5.3" cy="3.4" r="1.5" fill="#f0c098"/><path d="M3.6 5.5 H7 V11 H3.6 Z" fill="#48b090"/><path d="M4.3 11 L3.5 18.5 M6.3 11 L7.2 18.5" stroke="#243a60" stroke-width="1.7"/><path d="M10.3 0.8 L12.7 6 M17.3 0.8 L14.9 6" stroke="#e84a32" stroke-width="1.7"/><circle cx="13.8" cy="3.4" r="1.5" fill="#f0c098"/><path d="M12.1 5.5 H15.5 V11 H12.1 Z" fill="#e84a32"/><path d="M12.8 11 L12.0 18.5 M14.8 11 L15.7 18.5" stroke="#243a60" stroke-width="1.7"/></svg>
<div style="position:absolute;left:401px;top:234px;width:374px;height:629px;overflow:hidden">
<div class="t" style="left:123px;top:455px;font-size:13px;color:#888888;letter-spacing:0.4px">19:00</div>
<div class="t" style="left:173px;top:455px;font-size:13px;color:#888888;letter-spacing:0.4px">0/0</div>
<div class="t" style="left:222px;top:455px;font-size:13px;color:#888888">Хип-хоп бийлери</div>
<div style="position:absolute;left:0;top:474px;width:374px;height:20px;background:#d9f0ff"></div>
</div>
<svg style="position:absolute;left:474px;top:708.0px" width="20" height="20" viewBox="0 0 20 20"><path d="M1.8 0.8 L4.2 6 M8.8 0.8 L6.4 6" stroke="#48b090" stroke-width="1.7"/><circle cx="5.3" cy="3.4" r="1.5" fill="#f0c098"/><path d="M3.6 5.5 H7 V11 H3.6 Z" fill="#48b090"/><path d="M4.3 11 L3.5 18.5 M6.3 11 L7.2 18.5" stroke="#243a60" stroke-width="1.7"/><path d="M10.3 0.8 L12.7 6 M17.3 0.8 L14.9 6" stroke="#e84a32" stroke-width="1.7"/><circle cx="13.8" cy="3.4" r="1.5" fill="#f0c098"/><path d="M12.1 5.5 H15.5 V11 H12.1 Z" fill="#e84a32"/><path d="M12.8 11 L12.0 18.5 M14.8 11 L15.7 18.5" stroke="#243a60" stroke-width="1.7"/></svg>
<div style="position:absolute;left:401px;top:234px;width:374px;height:629px;overflow:hidden">
<div class="t" style="left:123px;top:475px;font-size:13px;color:#888888;letter-spacing:0.4px">20:00</div>
<div class="t" style="left:173px;top:475px;font-size:13px;color:#888888;letter-spacing:0.4px">0/0</div>
<div class="t" style="left:222px;top:475px;font-size:13px;color:#888888">Хип-хоп бийлери</div>
<div style="position:absolute;left:0;top:494px;width:374px;height:34px;background:#dcf8e0"></div>
<div style="position:absolute;left:33px;top:494px;width:341px;height:34px;background:#0080c6"></div>
<svg style="position:absolute;left:8px;top:502px" width="18" height="18"><circle cx="8.5" cy="8.5" r="7" fill="none" stroke="#333" stroke-width="1.4"/><path d="M5.35 5.35 L11.3 11.3 M11.3 7.45 V11.3 H7.45" fill="none" stroke="#333" stroke-width="1.4"/></svg>
<div class="t" style="left:33px;top:495px;font-size:13px;color:#f4f8ff;letter-spacing:0.4px">23.08.2024</div>
<div class="t" style="left:222px;top:495px;font-size:13px;color:#f4f8ff">Жума</div>
<div style="position:absolute;left:0;top:528px;width:374px;height:60px;background:#d9f0ff"></div>
</div>
<svg style="position:absolute;left:474px;top:782.0px" width="20" height="20" viewBox="0 0 20 20"><path d="M9 5 L13 0.5" stroke="#e8c0a0" stroke-width="0.9"/><circle cx="9.5" cy="2.8" r="1.8" fill="#4a2a1a"/><rect x="8.5" y="4.5" width="2.4" height="3.5" fill="#f0b898"/><rect x="8.3" y="5.6" width="2.8" height="1.2" fill="#e84040"/><ellipse cx="9.7" cy="11" rx="2.5" ry="3.4" fill="#f04a50"/><path d="M9.2 14 V18 M10.4 14 V18" stroke="#f0c8a8" stroke-width="0.9"/><path d="M4 13 L15 6" stroke="#d8e8d8" stroke-width="1.5" opacity="0.6"/></svg>
<div style="position:absolute;left:401px;top:234px;width:374px;height:629px;overflow:hidden">
<div class="t" style="left:123px;top:529px;font-size:13px;color:#888888;letter-spacing:0.4px">07:00</div>
<div class="t" style="left:173px;top:529px;font-size:13px;color:#888888;letter-spacing:0.4px">0/0</div>
<div class="t" style="left:222px;top:529px;font-size:13px;color:#888888">Барби бийи
Кызматкер 1
группа: Children</div>
<div style="position:absolute;left:0;top:588px;width:374px;height:60px;background:#dcf8e0"></div>
</div>
<svg style="position:absolute;left:474px;top:842.0px" width="20" height="20" viewBox="0 0 20 20"><path d="M9 5 L13 0.5" stroke="#e8c0a0" stroke-width="0.9"/><circle cx="9.5" cy="2.8" r="1.8" fill="#4a2a1a"/><rect x="8.5" y="4.5" width="2.4" height="3.5" fill="#f0b898"/><rect x="8.3" y="5.6" width="2.8" height="1.2" fill="#e84040"/><ellipse cx="9.7" cy="11" rx="2.5" ry="3.4" fill="#f04a50"/><path d="M9.2 14 V18 M10.4 14 V18" stroke="#f0c8a8" stroke-width="0.9"/><path d="M4 13 L15 6" stroke="#d8e8d8" stroke-width="1.5" opacity="0.6"/></svg>
<div style="position:absolute;left:401px;top:234px;width:374px;height:629px;overflow:hidden">
<div class="t" style="left:123px;top:589px;font-size:13px;color:#888888;letter-spacing:0.4px">08:00</div>
<div class="t" style="left:173px;top:589px;font-size:13px;color:#888888;letter-spacing:0.4px">0/0</div>
<div class="t" style="left:222px;top:589px;font-size:13px;color:#888888">Барби бийи
Кызматкер 1
группа: Children</div>
</div>
<div style="position:absolute;left:774px;top:167px;width:1px;height:697px;background:#c4c4c4"></div>
<div style="position:absolute;left:775px;top:167px;width:21px;height:696px;background:#fff"></div>
<svg style="position:absolute;left:782px;top:175px" width="8" height="5" viewBox="0 0 8 5"><path d="M0 4 L4 0 L8 4 Z" fill="#8a8a8a"/></svg>
<div style="position:absolute;left:781px;top:188px;width:10px;height:416px;background:#b8b8b8"></div>
<svg style="position:absolute;left:782px;top:850px" width="8" height="5" viewBox="0 0 8 5"><path d="M0 0 L4 4 L8 0 Z" fill="#8a8a8a"/></svg>
<div style="position:absolute;left:401px;top:863px;width:374px;height:1px;background:#c4c4c4"></div>
<svg style="position:absolute;left:410px;top:871px" width="5" height="8" viewBox="0 0 5 8"><path d="M4 0 L0 4 L4 8 Z" fill="#8a8a8a"/></svg>
<div style="position:absolute;left:422px;top:869px;width:302px;height:10px;background:#b8b8b8"></div>
<svg style="position:absolute;left:761px;top:871px" width="5" height="8" viewBox="0 0 5 8"><path d="M0 0 L4 4 L0 8 Z" fill="#8a8a8a"/></svg>
<div style="position:absolute;left:805px;top:165px;width:397px;height:720px;box-sizing:border-box;border:1px solid #c8c8c8;border-top:2px solid #c4c4c4;background:#fff"></div>
<div style="position:absolute;left:806px;top:167px;width:374px;height:32px;background:#f4f4f4"></div>
<div style="position:absolute;left:806px;top:199px;width:374px;height:1px;background:#c8c8c8"></div>
<div class="t" style="left:824px;top:176px;width:373px;text-align:center;font-size:13.5px;color:#333">2. Чоң зал</div>
<div style="position:absolute;left:806px;top:200px;width:374px;height:33px;background:#f4f4f4"></div>
<div style="position:absolute;left:806px;top:233px;width:374px;height:1px;background:#c8c8c8"></div>
<div style="position:absolute;left:928px;top:200px;width:1px;height:33px;background:#d0d0d0"></div>
<div style="position:absolute;left:978px;top:200px;width:1px;height:33px;background:#d0d0d0"></div>
<div style="position:absolute;left:1028px;top:200px;width:1px;height:33px;background:#d0d0d0"></div>
<div class="t" style="left:838px;top:210px;font-size:13.5px;color:#333;letter-spacing:0.5px">дата</div>
<svg style="position:absolute;left:906px;top:216px" width="12" height="6" viewBox="0 0 12 6"><path d="M0 6 L5.5 0 L11 6 Z" fill="#666"/></svg>
<div class="t" style="left:935px;top:210px;font-size:13.5px;color:#333;letter-spacing:0.6px">уба...</div>
<div class="t" style="left:994px;top:210px;font-size:13.5px;color:#333;letter-spacing:1.5px">эл</div>
<div class="t" style="left:1102px;top:210px;font-size:13.5px;color:#333;letter-spacing:0.8px">жазуу</div>
<div style="position:absolute;left:806px;top:234px;width:374px;height:629px;overflow:hidden">
<div style="position:absolute;left:0;top:0px;width:374px;height:34px;background:#d9f0ff"></div>
<div style="position:absolute;left:33px;top:0px;width:341px;height:34px;background:#0080c6"></div>
<svg style="position:absolute;left:8px;top:8px" width="18" height="18"><circle cx="8.5" cy="8.5" r="7" fill="none" stroke="#333" stroke-width="1.4"/><path d="M5.35 5.35 L11.3 11.3 M11.3 7.45 V11.3 H7.45" fill="none" stroke="#333" stroke-width="1.4"/></svg>
<div class="t" style="left:33px;top:1px;font-size:13px;color:#00e8f8;letter-spacing:0.4px">22.08.2024</div>
<div class="t" style="left:222px;top:1px;font-size:13px;color:#00e8f8">Бейшемби</div>
<div style="position:absolute;left:0;top:34px;width:374px;height:20px;background:#dcf8e0"></div>
</div>
<svg style="position:absolute;left:879px;top:268.0px" width="20" height="20" viewBox="0 0 20 20"><path d="M15 5.5 L19 4.2" stroke="#e0b898" stroke-width="1"/><circle cx="13.3" cy="2.8" r="1.6" fill="#e8c8a8"/><path d="M13.5 5.5 L16 5.5 L16.8 17.5 L14.2 17.5 Z" fill="#2e2430"/><circle cx="10.8" cy="4.2" r="1.8" fill="#8a5028"/><path d="M1.5 17.5 Q8 13.5 10.8 6.5 L14.5 8.5 L15.5 17.5 Z" fill="#2ea6e0"/></svg>
<div style="position:absolute;left:806px;top:234px;width:374px;height:629px;overflow:hidden">
<div class="t" style="left:123px;top:35px;font-size:13px;color:#888888;letter-spacing:0.4px">08:00</div>
<div class="t" style="left:173px;top:35px;font-size:13px;color:#888888;letter-spacing:0.4px">0/0</div>
<div class="t" style="left:222px;top:35px;font-size:13px;color:#888888">Крумп бийи</div>
<div style="position:absolute;left:0;top:54px;width:374px;height:20px;background:#d9f0ff"></div>
</div>
<svg style="position:absolute;left:879px;top:288.0px" width="20" height="20" viewBox="0 0 20 20"><path d="M15 5.5 L19 4.2" stroke="#e0b898" stroke-width="1"/><circle cx="13.3" cy="2.8" r="1.6" fill="#e8c8a8"/><path d="M13.5 5.5 L16 5.5 L16.8 17.5 L14.2 17.5 Z" fill="#2e2430"/><circle cx="10.8" cy="4.2" r="1.8" fill="#8a5028"/><path d="M1.5 17.5 Q8 13.5 10.8 6.5 L14.5 8.5 L15.5 17.5 Z" fill="#2ea6e0"/></svg>
<div style="position:absolute;left:806px;top:234px;width:374px;height:629px;overflow:hidden">
<div class="t" style="left:123px;top:55px;font-size:13px;color:#888888;letter-spacing:0.4px">09:00</div>
<div class="t" style="left:173px;top:55px;font-size:13px;color:#888888;letter-spacing:0.4px">0/0</div>
<div class="t" style="left:222px;top:55px;font-size:13px;color:#888888">Крумп бийи</div>
<div style="position:absolute;left:0;top:74px;width:374px;height:20px;background:#dcf8e0"></div>
<div style="position:absolute;left:123px;top:74px;width:251px;height:20px;background:#fffcb8"></div>
</div>
<svg style="position:absolute;left:879px;top:308.0px" width="20" height="20" viewBox="0 0 20 20"><path d="M15 5.5 L19 4.2" stroke="#e0b898" stroke-width="1"/><circle cx="13.3" cy="2.8" r="1.6" fill="#e8c8a8"/><path d="M13.5 5.5 L16 5.5 L16.8 17.5 L14.2 17.5 Z" fill="#2e2430"/><circle cx="10.8" cy="4.2" r="1.8" fill="#8a5028"/><path d="M1.5 17.5 Q8 13.5 10.8 6.5 L14.5 8.5 L15.5 17.5 Z" fill="#2ea6e0"/></svg>
<div style="position:absolute;left:806px;top:234px;width:374px;height:629px;overflow:hidden">
<div class="t" style="left:123px;top:75px;font-size:13px;color:#111;letter-spacing:0.4px">10:00</div>
<div class="t" style="left:173px;top:75px;font-size:13px;color:#111;letter-spacing:0.4px">0/2</div>
<div class="t" style="left:222px;top:75px;font-size:13px;color:#111">Крумп бийи</div>
<div style="position:absolute;left:0;top:94px;width:374px;height:20px;background:#d9f0ff"></div>
</div>
<svg style="position:absolute;left:879px;top:328.0px" width="20" height="20" viewBox="0 0 20 20"><path d="M15 5.5 L19 4.2" stroke="#e0b898" stroke-width="1"/><circle cx="13.3" cy="2.8" r="1.6" fill="#e8c8a8"/><path d="M13.5 5.5 L16 5.5 L16.8 17.5 L14.2 17.5 Z" fill="#2e2430"/><circle cx="10.8" cy="4.2" r="1.8" fill="#8a5028"/><path d="M1.5 17.5 Q8 13.5 10.8 6.5 L14.5 8.5 L15.5 17.5 Z" fill="#2ea6e0"/></svg>
<div style="position:absolute;left:806px;top:234px;width:374px;height:629px;overflow:hidden">
<div class="t" style="left:123px;top:95px;font-size:13px;color:#888888;letter-spacing:0.4px">11:00</div>
<div class="t" style="left:173px;top:95px;font-size:13px;color:#888888;letter-spacing:0.4px">0/0</div>
<div class="t" style="left:222px;top:95px;font-size:13px;color:#888888">Крумп бийи</div>
<div style="position:absolute;left:0;top:114px;width:374px;height:20px;background:#dcf8e0"></div>
</div>
<svg style="position:absolute;left:879px;top:348.0px" width="20" height="20" viewBox="0 0 20 20"><path d="M15 5.5 L19 4.2" stroke="#e0b898" stroke-width="1"/><circle cx="13.3" cy="2.8" r="1.6" fill="#e8c8a8"/><path d="M13.5 5.5 L16 5.5 L16.8 17.5 L14.2 17.5 Z" fill="#2e2430"/><circle cx="10.8" cy="4.2" r="1.8" fill="#8a5028"/><path d="M1.5 17.5 Q8 13.5 10.8 6.5 L14.5 8.5 L15.5 17.5 Z" fill="#2ea6e0"/></svg>
<div style="position:absolute;left:806px;top:234px;width:374px;height:629px;overflow:hidden">
<div class="t" style="left:123px;top:115px;font-size:13px;color:#888888;letter-spacing:0.4px">12:00</div>
<div class="t" style="left:173px;top:115px;font-size:13px;color:#888888;letter-spacing:0.4px">0/0</div>
<div class="t" style="left:222px;top:115px;font-size:13px;color:#888888">Крумп бийи</div>
<div style="position:absolute;left:0;top:134px;width:374px;height:60px;background:#d9f0ff"></div>
</div>
<svg style="position:absolute;left:879px;top:388.0px" width="20" height="20" viewBox="0 0 20 20"><ellipse cx="7.6" cy="3.4" rx="2" ry="1.8" fill="#e02828"/><path d="M10.5 5.5 Q12 7.5 11 10" stroke="#302020" stroke-width="1.4" fill="none"/><path d="M9.8 6 L10.6 10.5" stroke="#f0b090" stroke-width="1.3"/><path d="M9 9.5 H11 L11.3 12.5 H9 Z" fill="#d82a2a"/><path d="M4.5 18.5 L5 13.5 Q8 11.5 10.8 12 L16 17.5 Q11 19 4.5 18.5 Z" fill="#d82424"/></svg>
<div style="position:absolute;left:806px;top:234px;width:374px;height:629px;overflow:hidden">
<div class="t" style="left:123px;top:135px;font-size:13px;color:#888888;letter-spacing:0.4px">13:00</div>
<div class="t" style="left:173px;top:135px;font-size:13px;color:#888888;letter-spacing:0.4px">0/0</div>
<div class="t" style="left:222px;top:135px;font-size:13px;color:#888888">Үй бийи
Кызматкер 2
группа: Children</div>
<div style="position:absolute;left:0;top:194px;width:374px;height:60px;background:#dcf8e0"></div>
</div>
<svg style="position:absolute;left:879px;top:448.0px" width="20" height="20" viewBox="0 0 20 20"><ellipse cx="7.6" cy="3.4" rx="2" ry="1.8" fill="#e02828"/><path d="M10.5 5.5 Q12 7.5 11 10" stroke="#302020" stroke-width="1.4" fill="none"/><path d="M9.8 6 L10.6 10.5" stroke="#f0b090" stroke-width="1.3"/><path d="M9 9.5 H11 L11.3 12.5 H9 Z" fill="#d82a2a"/><path d="M4.5 18.5 L5 13.5 Q8 11.5 10.8 12 L16 17.5 Q11 19 4.5 18.5 Z" fill="#d82424"/></svg>
<div style="position:absolute;left:806px;top:234px;width:374px;height:629px;overflow:hidden">
<div class="t" style="left:123px;top:195px;font-size:13px;color:#888888;letter-spacing:0.4px">14:00</div>
<div class="t" style="left:173px;top:195px;font-size:13px;color:#888888;letter-spacing:0.4px">0/0</div>
<div class="t" style="left:222px;top:195px;font-size:13px;color:#888888">Үй бийи
Кызматкер 2
группа: Children</div>
<div style="position:absolute;left:0;top:254px;width:374px;height:60px;background:#d9f0ff"></div>
<div style="position:absolute;left:123px;top:254px;width:251px;height:60px;background:#fffcb8"></div>
</div>
<svg style="position:absolute;left:879px;top:508.0px" width="20" height="20" viewBox="0 0 20 20"><ellipse cx="7.6" cy="3.4" rx="2" ry="1.8" fill="#e02828"/><path d="M10.5 5.5 Q12 7.5 11 10" stroke="#302020" stroke-width="1.4" fill="none"/><path d="M9.8 6 L10.6 10.5" stroke="#f0b090" stroke-width="1.3"/><path d="M9 9.5 H11 L11.3 12.5 H9 Z" fill="#d82a2a"/><path d="M4.5 18.5 L5 13.5 Q8 11.5 10.8 12 L16 17.5 Q11 19 4.5 18.5 Z" fill="#d82424"/></svg>
<div style="position:absolute;left:806px;top:234px;width:374px;height:629px;overflow:hidden">
<div class="t" style="left:123px;top:255px;font-size:13px;color:#d81018;letter-spacing:0.4px">15:00</div>
<div class="t" style="left:173px;top:255px;font-size:13px;color:#d81018;letter-spacing:0.4px">0/1</div>
<div class="t" style="left:222px;top:255px;font-size:13px;color:#d81018">Үй бийи
Кызматкер 2
группа: Children</div>
<div style="position:absolute;left:0;top:314px;width:374px;height:60px;background:#dcf8e0"></div>
</div>
<svg style="position:absolute;left:879px;top:568.0px" width="20" height="20" viewBox="0 0 20 20"><ellipse cx="7.6" cy="3.4" rx="2" ry="1.8" fill="#e02828"/><path d="M10.5 5.5 Q12 7.5 11 10" stroke="#302020" stroke-width="1.4" fill="none"/><path d="M9.8 6 L10.6 10.5" stroke="#f0b090" stroke-width="1.3"/><path d="M9 9.5 H11 L11.3 12.5 H9 Z" fill="#d82a2a"/><path d="M4.5 18.5 L5 13.5 Q8 11.5 10.8 12 L16 17.5 Q11 19 4.5 18.5 Z" fill="#d82424"/></svg>
<div style="position:absolute;left:806px;top:234px;width:374px;height:629px;overflow:hidden">
<div class="t" style="left:123px;top:315px;font-size:13px;color:#888888;letter-spacing:0.4px">16:00</div>
<div class="t" style="left:173px;top:315px;font-size:13px;color:#888888;letter-spacing:0.4px">0/0</div>
<div class="t" style="left:222px;top:315px;font-size:13px;color:#888888">Үй бийи
Кызматкер 2
группа: Children</div>
<div style="position:absolute;left:0;top:374px;width:374px;height:60px;background:#d9f0ff"></div>
</div>
<svg style="position:absolute;left:879px;top:628.0px" width="20" height="20" viewBox="0 0 20 20"><ellipse cx="7.6" cy="3.4" rx="2" ry="1.8" fill="#e02828"/><path d="M10.5 5.5 Q12 7.5 11 10" stroke="#302020" stroke-width="1.4" fill="none"/><path d="M9.8 6 L10.6 10.5" stroke="#f0b090" stroke-width="1.3"/><path d="M9 9.5 H11 L11.3 12.5 H9 Z" fill="#d82a2a"/><path d="M4.5 18.5 L5 13.5 Q8 11.5 10.8 12 L16 17.5 Q11 19 4.5 18.5 Z" fill="#d82424"/></svg>
<div style="position:absolute;left:806px;top:234px;width:374px;height:629px;overflow:hidden">
<div class="t" style="left:123px;top:375px;font-size:13px;color:#888888;letter-spacing:0.4px">17:00</div>
<div class="t" style="left:173px;top:375px;font-size:13px;color:#888888;letter-spacing:0.4px">0/0</div>
<div class="t" style="left:222px;top:375px;font-size:13px;color:#888888">Үй бийи
Кызматкер 2
группа: Children</div>
<div style="position:absolute;left:0;top:434px;width:374px;height:20px;background:#dcf8e0"></div>
<div style="position:absolute;left:123px;top:434px;width:251px;height:20px;background:#fffcb8"></div>
</div>
<svg style="position:absolute;left:879px;top:668.0px" width="20" height="20" viewBox="0 0 20 20"><path d="M1.5 2 L7.5 7 M18.5 2.5 L12.5 7" stroke="#78c040" stroke-width="2.2"/><circle cx="1.8" cy="2" r="1" fill="#f0b060"/><circle cx="18.3" cy="2.4" r="1" fill="#f0c070"/><ellipse cx="10" cy="3.6" rx="2.1" ry="2.4" fill="#e86050"/><path d="M7 7 H10 V12.5 H7.5 Z" fill="#f070b0"/><path d="M10 7 H13 L12.5 12.5 H10 Z" fill="#70c850"/><rect x="5.5" y="12.5" width="9.5" height="6.5" rx="1.5" fill="#c8904a"/><rect x="5.5" y="12.5" width="2" height="6.5" fill="#f0b040"/></svg>
<div style="position:absolute;left:806px;top:234px;width:374px;height:629px;overflow:hidden">
<div class="t" style="left:123px;top:435px;font-size:13px;color:#111;letter-spacing:0.4px">18:00</div>
<div class="t" style="left:173px;top:435px;font-size:13px;color:#111;letter-spacing:0.4px">0/1</div>
<div class="t" style="left:222px;top:435px;font-size:13px;color:#111">Толкундоо бийи</div>
<div style="position:absolute;left:0;top:454px;width:374px;height:20px;background:#d9f0ff"></div>
</div>
<svg style="position:absolute;left:879px;top:688.0px" width="20" height="20" viewBox="0 0 20 20"><path d="M1.5 2 L7.5 7 M18.5 2.5 L12.5 7" stroke="#78c040" stroke-width="2.2"/><circle cx="1.8" cy="2" r="1" fill="#f0b060"/><circle cx="18.3" cy="2.4" r="1" fill="#f0c070"/><ellipse cx="10" cy="3.6" rx="2.1" ry="2.4" fill="#e86050"/><path d="M7 7 H10 V12.5 H7.5 Z" fill="#f070b0"/><path d="M10 7 H13 L12.5 12.5 H10 Z" fill="#70c850"/><rect x="5.5" y="12.5" width="9.5" height="6.5" rx="1.5" fill="#c8904a"/><rect x="5.5" y="12.5" width="2" height="6.5" fill="#f0b040"/></svg>
<div style="position:absolute;left:806px;top:234px;width:374px;height:629px;overflow:hidden">
<div class="t" style="left:123px;top:455px;font-size:13px;color:#888888;letter-spacing:0.4px">19:00</div>
<div class="t" style="left:173px;top:455px;font-size:13px;color:#888888;letter-spacing:0.4px">0/0</div>
<div class="t" style="left:222px;top:455px;font-size:13px;color:#888888">Толкундоо бийи</div>
<div style="position:absolute;left:0;top:474px;width:374px;height:20px;background:#dcf8e0"></div>
</div>
<svg style="position:absolute;left:879px;top:708.0px" width="20" height="20" viewBox="0 0 20 20"><path d="M1.5 2 L7.5 7 M18.5 2.5 L12.5 7" stroke="#78c040" stroke-width="2.2"/><circle cx="1.8" cy="2" r="1" fill="#f0b060"/><circle cx="18.3" cy="2.4" r="1" fill="#f0c070"/><ellipse cx="10" cy="3.6" rx="2.1" ry="2.4" fill="#e86050"/><path d="M7 7 H10 V12.5 H7.5 Z" fill="#f070b0"/><path d="M10 7 H13 L12.5 12.5 H10 Z" fill="#70c850"/><rect x="5.5" y="12.5" width="9.5" height="6.5" rx="1.5" fill="#c8904a"/><rect x="5.5" y="12.5" width="2" height="6.5" fill="#f0b040"/></svg>
<div style="position:absolute;left:806px;top:234px;width:374px;height:629px;overflow:hidden">
<div class="t" style="left:123px;top:475px;font-size:13px;color:#888888;letter-spacing:0.4px">20:00</div>
<div class="t" style="left:173px;top:475px;font-size:13px;color:#888888;letter-spacing:0.4px">0/0</div>
<div class="t" style="left:222px;top:475px;font-size:13px;color:#888888">Толкундоо бийи</div>
<div style="position:absolute;left:0;top:494px;width:374px;height:20px;background:#d9f0ff"></div>
</div>
<svg style="position:absolute;left:879px;top:728.0px" width="20" height="20" viewBox="0 0 20 20"><path d="M1.5 2 L7.5 7 M18.5 2.5 L12.5 7" stroke="#78c040" stroke-width="2.2"/><circle cx="1.8" cy="2" r="1" fill="#f0b060"/><circle cx="18.3" cy="2.4" r="1" fill="#f0c070"/><ellipse cx="10" cy="3.6" rx="2.1" ry="2.4" fill="#e86050"/><path d="M7 7 H10 V12.5 H7.5 Z" fill="#f070b0"/><path d="M10 7 H13 L12.5 12.5 H10 Z" fill="#70c850"/><rect x="5.5" y="12.5" width="9.5" height="6.5" rx="1.5" fill="#c8904a"/><rect x="5.5" y="12.5" width="2" height="6.5" fill="#f0b040"/></svg>
<div style="position:absolute;left:806px;top:234px;width:374px;height:629px;overflow:hidden">
<div class="t" style="left:123px;top:495px;font-size:13px;color:#888888;letter-spacing:0.4px">21:00</div>
<div class="t" style="left:173px;top:495px;font-size:13px;color:#888888;letter-spacing:0.4px">0/0</div>
<div class="t" style="left:222px;top:495px;font-size:13px;color:#888888">Толкундоо бийи</div>
<div style="position:absolute;left:0;top:514px;width:374px;height:20px;background:#dcf8e0"></div>
</div>
<svg style="position:absolute;left:879px;top:748.0px" width="20" height="20" viewBox="0 0 20 20"><path d="M1.5 2 L7.5 7 M18.5 2.5 L12.5 7" stroke="#78c040" stroke-width="2.2"/><circle cx="1.8" cy="2" r="1" fill="#f0b060"/><circle cx="18.3" cy="2.4" r="1" fill="#f0c070"/><ellipse cx="10" cy="3.6" rx="2.1" ry="2.4" fill="#e86050"/><path d="M7 7 H10 V12.5 H7.5 Z" fill="#f070b0"/><path d="M10 7 H13 L12.5 12.5 H10 Z" fill="#70c850"/><rect x="5.5" y="12.5" width="9.5" height="6.5" rx="1.5" fill="#c8904a"/><rect x="5.5" y="12.5" width="2" height="6.5" fill="#f0b040"/></svg>
<div style="position:absolute;left:806px;top:234px;width:374px;height:629px;overflow:hidden">
<div class="t" style="left:123px;top:515px;font-size:13px;color:#888888;letter-spacing:0.4px">22:00</div>
<div class="t" style="left:173px;top:515px;font-size:13px;color:#888888;letter-spacing:0.4px">0/0</div>
<div class="t" style="left:222px;top:515px;font-size:13px;color:#888888">Толкундоо бийи</div>
<div style="position:absolute;left:0;top:534px;width:374px;height:34px;background:#d9f0ff"></div>
<div style="position:absolute;left:33px;top:534px;width:341px;height:34px;background:#0080c6"></div>
<svg style="position:absolute;left:8px;top:542px" width="18" height="18"><circle cx="8.5" cy="8.5" r="7" fill="none" stroke="#333" stroke-width="1.4"/><path d="M5.35 5.35 L11.3 11.3 M11.3 7.45 V11.3 H7.45" fill="none" stroke="#333" stroke-width="1.4"/></svg>
<div class="t" style="left:33px;top:535px;font-size:13px;color:#f4f8ff;letter-spacing:0.4px">23.08.2024</div>
<div class="t" style="left:222px;top:535px;font-size:13px;color:#f4f8ff">Жума</div>
<div style="position:absolute;left:0;top:568px;width:374px;height:20px;background:#dcf8e0"></div>
</div>
<svg style="position:absolute;left:879px;top:802.0px" width="20" height="20" viewBox="0 0 20 20"><path d="M15 5.5 L19 4.2" stroke="#e0b898" stroke-width="1"/><circle cx="13.3" cy="2.8" r="1.6" fill="#e8c8a8"/><path d="M13.5 5.5 L16 5.5 L16.8 17.5 L14.2 17.5 Z" fill="#2e2430"/><circle cx="10.8" cy="4.2" r="1.8" fill="#8a5028"/><path d="M1.5 17.5 Q8 13.5 10.8 6.5 L14.5 8.5 L15.5 17.5 Z" fill="#2ea6e0"/></svg>
<div style="position:absolute;left:806px;top:234px;width:374px;height:629px;overflow:hidden">
<div class="t" style="left:123px;top:569px;font-size:13px;color:#888888;letter-spacing:0.4px">08:00</div>
<div class="t" style="left:173px;top:569px;font-size:13px;color:#888888;letter-spacing:0.4px">0/0</div>
<div class="t" style="left:222px;top:569px;font-size:13px;color:#888888">Крумп бийи</div>
<div style="position:absolute;left:0;top:588px;width:374px;height:20px;background:#d9f0ff"></div>
</div>
<svg style="position:absolute;left:879px;top:822.0px" width="20" height="20" viewBox="0 0 20 20"><path d="M15 5.5 L19 4.2" stroke="#e0b898" stroke-width="1"/><circle cx="13.3" cy="2.8" r="1.6" fill="#e8c8a8"/><path d="M13.5 5.5 L16 5.5 L16.8 17.5 L14.2 17.5 Z" fill="#2e2430"/><circle cx="10.8" cy="4.2" r="1.8" fill="#8a5028"/><path d="M1.5 17.5 Q8 13.5 10.8 6.5 L14.5 8.5 L15.5 17.5 Z" fill="#2ea6e0"/></svg>
<div style="position:absolute;left:806px;top:234px;width:374px;height:629px;overflow:hidden">
<div class="t" style="left:123px;top:589px;font-size:13px;color:#888888;letter-spacing:0.4px">09:00</div>
<div class="t" style="left:173px;top:589px;font-size:13px;color:#888888;letter-spacing:0.4px">0/0</div>
<div class="t" style="left:222px;top:589px;font-size:13px;color:#888888">Крумп бийи</div>
<div style="position:absolute;left:0;top:608px;width:374px;height:20px;background:#dcf8e0"></div>
</div>
<svg style="position:absolute;left:879px;top:842.0px" width="20" height="20" viewBox="0 0 20 20"><path d="M15 5.5 L19 4.2" stroke="#e0b898" stroke-width="1"/><circle cx="13.3" cy="2.8" r="1.6" fill="#e8c8a8"/><path d="M13.5 5.5 L16 5.5 L16.8 17.5 L14.2 17.5 Z" fill="#2e2430"/><circle cx="10.8" cy="4.2" r="1.8" fill="#8a5028"/><path d="M1.5 17.5 Q8 13.5 10.8 6.5 L14.5 8.5 L15.5 17.5 Z" fill="#2ea6e0"/></svg>
<div style="position:absolute;left:806px;top:234px;width:374px;height:629px;overflow:hidden">
<div class="t" style="left:123px;top:609px;font-size:13px;color:#888888;letter-spacing:0.4px">10:00</div>
<div class="t" style="left:173px;top:609px;font-size:13px;color:#888888;letter-spacing:0.4px">0/0</div>
<div class="t" style="left:222px;top:609px;font-size:13px;color:#888888">Крумп бийи</div>
</div>
<div style="position:absolute;left:1179px;top:167px;width:1px;height:697px;background:#c4c4c4"></div>
<div style="position:absolute;left:1180px;top:167px;width:21px;height:696px;background:#fff"></div>
<svg style="position:absolute;left:1187px;top:175px" width="8" height="5" viewBox="0 0 8 5"><path d="M0 4 L4 0 L8 4 Z" fill="#8a8a8a"/></svg>
<div style="position:absolute;left:1186px;top:188px;width:10px;height:385px;background:#b8b8b8"></div>
<svg style="position:absolute;left:1187px;top:850px" width="8" height="5" viewBox="0 0 8 5"><path d="M0 0 L4 4 L8 0 Z" fill="#8a8a8a"/></svg>
<div style="position:absolute;left:806px;top:863px;width:374px;height:1px;background:#c4c4c4"></div>
<svg style="position:absolute;left:815px;top:871px" width="5" height="8" viewBox="0 0 5 8"><path d="M4 0 L0 4 L4 8 Z" fill="#8a8a8a"/></svg>
<div style="position:absolute;left:827px;top:869px;width:302px;height:10px;background:#b8b8b8"></div>
<svg style="position:absolute;left:1166px;top:871px" width="5" height="8" viewBox="0 0 5 8"><path d="M0 0 L4 4 L0 8 Z" fill="#8a8a8a"/></svg>
<div style="position:absolute;left:213px;top:916px;width:999px;height:4px;box-sizing:border-box;border:1px solid #c8c8c8;border-left:none;border-radius:0 2px 2px 0;background:#fff"></div>
<div style="position:absolute;left:22px;top:916px;width:192px;height:55px;box-sizing:border-box;border:1px solid #c8c8c8;border-bottom:none;background:#fff"></div>
<div style="position:absolute;left:22px;top:969px;width:192px;height:3px;background:#1ea0f0"></div>
<svg style="position:absolute;left:40px;top:930px" width="32" height="28" viewBox="0 0 32 28"><rect x="1" y="1" width="29" height="25" rx="2" fill="#e8eef8" stroke="#6a80b8" stroke-width="1.3"/><rect x="1.5" y="1.5" width="28" height="5" fill="#7aa0d8"/><circle cx="26" cy="4" r="1" fill="#e04040"/></svg>
<div class="t" style="left:82px;top:937px;font-size:13.5px;color:#1e90e6;-webkit-text-stroke:0;">регистрация</div>
<svg style="position:absolute;left:181px;top:938px" width="11" height="11" viewBox="0 0 11 11"><path d="M1 1 L10 10 M10 1 L1 10" stroke="#1e90e6" stroke-width="2"/></svg>
<svg style="position:absolute;left:28px;top:975px" width="22" height="22" viewBox="0 0 22 22"><circle cx="10" cy="10" r="9.5" fill="#3a7cc4"/><rect x="8.3" y="8" width="3.4" height="7.5" fill="#fff"/><circle cx="10" cy="5" r="1.8" fill="#fff"/></svg>
<div class="t" style="left:70px;top:977px;font-size:13px;color:#333;letter-spacing:0.3px">7.2.9059.10 Standard</div>
<div style="position:absolute;left:229px;top:976px;width:1px;height:18px;background:#b8b8b8"></div>
<svg style="position:absolute;left:243px;top:975px" width="18" height="20" viewBox="0 0 18 20"><rect x="2" y="1" width="13" height="17" rx="3" fill="#f0b050" stroke="#b06020"/><path d="M2 7 H15 M2 12 H15" stroke="#b06020"/></svg>
<div class="t" style="left:281px;top:977px;font-size:13px;color:#333;letter-spacing:0.3px">localhost (utf8)</div>
<div style="position:absolute;left:399px;top:976px;width:1px;height:18px;background:#b8b8b8"></div>
<svg style="position:absolute;left:411px;top:975px" width="20" height="20" viewBox="0 0 20 20"><path d="M1.5 20 Q1.5 12.5 10 12.5 Q18.5 12.5 18.5 20 Z" fill="#90c860" stroke="#5a9a30" stroke-width="0.9"/><ellipse cx="10" cy="7.2" rx="4.3" ry="5" fill="#f4d0a8" stroke="#a86a38" stroke-width="0.9"/><path d="M5.5 7 Q5 1.5 10 1.5 Q15 1.5 14.5 7 Q13.5 4.5 10 4.5 Q6.5 4.5 5.5 7 Z" fill="#b8703a"/></svg>
<div class="t" style="left:451px;top:977px;font-size:13px;color:#333;">NIKOLAY (MAIN)</div>
<div style="position:absolute;left:577px;top:976px;width:1px;height:18px;background:#b8b8b8"></div>
<svg style="position:absolute;left:590px;top:975px" width="20" height="20" viewBox="0 0 20 20"><rect x="1" y="1" width="18" height="18" fill="#fff" stroke="#6a80b8"/><rect x="1" y="1" width="18" height="4" fill="#e05050"/><text x="10" y="16" font-size="10" text-anchor="middle" fill="#2040a0" font-family="Liberation Sans" font-weight="bold">31</text></svg>
<div class="t" style="left:631px;top:977px;font-size:13px;color:#333;letter-spacing:0.5px">22.08.2024</div>
<div style="position:absolute;left:727px;top:976px;width:1px;height:18px;background:#b8b8b8"></div>
<div class="t" style="left:762px;top:977px;font-size:13px;color:#333;letter-spacing:0.5px">00:00:00:003</div>
<div style="position:absolute;left:875px;top:976px;width:1px;height:18px;background:#b8b8b8"></div>
<div class="t" style="left:889px;top:977px;font-size:13px;color:#333;letter-spacing:0.3px">11:00</div>
<div style="position:absolute;left:1181px;top:976px;width:1px;height:18px;background:#b8b8b8"></div>
<svg style="position:absolute;left:1196px;top:980px" width="14" height="14" viewBox="0 0 14 14"><rect x="10" y="1" width="2" height="2" fill="#707070"/><rect x="10" y="5" width="2" height="2" fill="#707070"/><rect x="6" y="5" width="2" height="2" fill="#707070"/><rect x="10" y="9" width="2" height="2" fill="#707070"/><rect x="6" y="9" width="2" height="2" fill="#707070"/><rect x="2" y="9" width="2" height="2" fill="#707070"/></svg>
</body></html>
